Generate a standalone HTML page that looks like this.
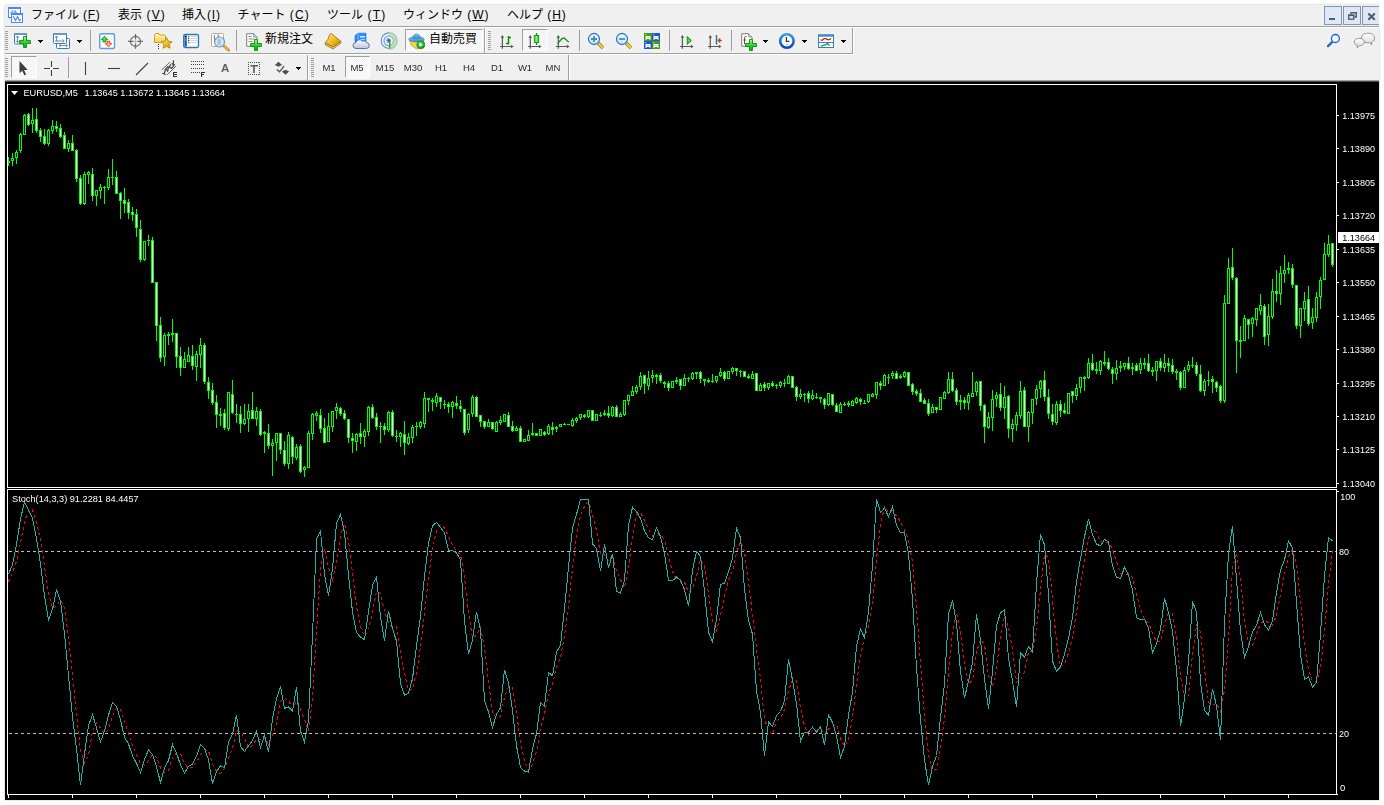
<!DOCTYPE html>
<html lang="ja">
<head>
<meta charset="utf-8">
<title>MetaTrader 4 - EURUSD,M5</title>
<style>
html,body{margin:0;padding:0;}
body{width:1384px;height:805px;overflow:hidden;background:#fff;position:relative;font-family:"Liberation Sans","Noto Sans CJK JP",sans-serif;}
#win{position:absolute;left:5px;top:5px;width:1374px;height:795px;background:#f0f0f0;box-shadow:0 0 2px rgba(0,0,0,0.28);}
.menu{position:absolute;top:5px;height:20px;line-height:20px;font-size:12px;color:#000;white-space:nowrap;}
.menu .l{letter-spacing:1.15px;}
.hl{position:absolute;height:1px;}
.vl{position:absolute;width:1px;}
.grip{position:absolute;width:3px;background:repeating-linear-gradient(to bottom,#a0a0a0 0,#a0a0a0 1px,transparent 1px,transparent 2px);}
.tf{position:absolute;top:58px;width:28px;height:20px;line-height:20px;text-align:center;font-size:9.5px;color:#2a2a2a;will-change:transform;}
.pressed{position:absolute;border:1px solid #a0a0a0;border-right-color:#fff;border-bottom-color:#fff;background-color:#f8f8f8;background-image:conic-gradient(#fff 25%,#f0f0f0 0 50%,#fff 0 75%,#f0f0f0 0);background-size:2px 2px;box-sizing:border-box;}
.dd{position:absolute;width:0;height:0;border-left:3px solid transparent;border-right:3px solid transparent;border-top:3px solid #000;}
.tbtxt{position:absolute;font-size:12px;color:#000;white-space:nowrap;line-height:14px;}
svg{position:absolute;overflow:visible;}
#chartbg{position:absolute;left:5px;top:81px;width:1374px;height:719px;background:#000;}
</style>
</head>
<body>
<div id="win"></div>
<!-- menu bar -->
<div class="menu" style="left:31px">ファイル<span class="l" style="letter-spacing:0.7px"> (<u>F</u>)</span></div>
<div class="menu" style="left:118px">表示<span class="l"> (<u>V</u>)</span></div>
<div class="menu" style="left:182px">挿入<span class="l" style="letter-spacing:0.8px;margin-left:1px">(<u>I</u>)</span></div>
<div class="menu" style="left:237.5px">チャート<span class="l"> (<u>C</u>)</span></div>
<div class="menu" style="left:327px">ツール<span class="l"> (<u>T</u>)</span></div>
<div class="menu" style="left:403px">ウィンドウ<span class="l" style="letter-spacing:0.95px"> (<u>W</u>)</span></div>
<div class="menu" style="left:507px">ヘルプ<span class="l" style="letter-spacing:0.9px"> (<u>H</u>)</span></div>
<div class="hl" style="left:5px;top:26px;width:1374px;background:#a0a0a0"></div>
<div class="hl" style="left:5px;top:27px;width:1374px;background:#fff"></div>
<!-- toolbar row 1 -->
<div class="grip" style="left:5px;top:31px;height:19px"></div>
<div class="hl" style="left:5px;top:53px;width:848px;background:#a0a0a0"></div>
<div class="hl" style="left:5px;top:54px;width:849px;background:#fff"></div>
<div class="vl" style="left:853px;top:28px;height:26px;background:#fff"></div>
<div class="vl" style="left:90px;top:30px;height:21px;background:#a0a0a0"></div>
<div class="vl" style="left:236px;top:30px;height:21px;background:#a0a0a0"></div>
<div class="vl" style="left:484px;top:28px;height:25px;background:#a0a0a0"></div>
<div class="vl" style="left:485px;top:28px;height:25px;background:#fff"></div>
<div class="grip" style="left:488px;top:31px;height:19px"></div>
<div class="vl" style="left:579px;top:30px;height:21px;background:#a0a0a0"></div>
<div class="vl" style="left:669px;top:30px;height:21px;background:#a0a0a0"></div>
<div class="vl" style="left:731px;top:30px;height:21px;background:#a0a0a0"></div>
<div class="vl" style="left:852px;top:28px;height:26px;background:#a0a0a0"></div>
<div class="tbtxt" style="left:265px;top:32px">新規注文</div>
<div class="pressed" style="left:405px;top:29px;width:78px;height:22px"></div>
<div class="tbtxt" style="left:429px;top:32px">自動売買</div>
<div class="pressed" style="left:522px;top:29px;width:26px;height:22px"></div>
<!-- toolbar row 2 -->
<div class="grip" style="left:5px;top:58px;height:19px"></div>
<div class="pressed" style="left:11px;top:56px;width:26px;height:22px"></div>
<div class="vl" style="left:68px;top:57px;height:21px;background:#a0a0a0"></div>
<div class="vl" style="left:307px;top:55px;height:25px;background:#a0a0a0"></div>
<div class="vl" style="left:308px;top:55px;height:25px;background:#fff"></div>
<div class="grip" style="left:311px;top:58px;height:19px"></div>
<div class="pressed" style="left:345px;top:56px;width:25px;height:22px"></div>
<div class="tf" style="left:315px">M1</div>
<div class="tf" style="left:343px">M5</div>
<div class="tf" style="left:371px">M15</div>
<div class="tf" style="left:399px">M30</div>
<div class="tf" style="left:427px">H1</div>
<div class="tf" style="left:455px">H4</div>
<div class="tf" style="left:483px">D1</div>
<div class="tf" style="left:511px">W1</div>
<div class="tf" style="left:539px">MN</div>
<div class="vl" style="left:568px;top:55px;height:25px;background:#a0a0a0"></div>
<div class="vl" style="left:569px;top:55px;height:25px;background:#fff"></div>
<div class="hl" style="left:5px;top:80px;width:1374px;background:#a4a4a4"></div>
<svg width="1384" height="82" viewBox="0 0 1384 82" style="left:0;top:0">
<defs>
<linearGradient id="gPlus" x1="0" y1="0" x2="0" y2="1"><stop offset="0" stop-color="#b0f8b0"/><stop offset="0.45" stop-color="#38d838"/><stop offset="1" stop-color="#0c9c0c"/></linearGradient>
<linearGradient id="gGold" x1="0" y1="0" x2="1" y2="1"><stop offset="0" stop-color="#fff0a0"/><stop offset="0.5" stop-color="#f0c020"/><stop offset="1" stop-color="#c08810"/></linearGradient>
<linearGradient id="gFold" x1="0" y1="0" x2="0" y2="1"><stop offset="0" stop-color="#fff6c0"/><stop offset="1" stop-color="#f2cf50"/></linearGradient>
<linearGradient id="gLens" x1="0" y1="0" x2="0" y2="1"><stop offset="0" stop-color="#f4fbff"/><stop offset="1" stop-color="#c4e4f4"/></linearGradient>
<linearGradient id="gTitle" x1="0" y1="0" x2="0" y2="1"><stop offset="0" stop-color="#6aa6e0"/><stop offset="1" stop-color="#2e6fb8"/></linearGradient>
<linearGradient id="gHat" x1="0" y1="0" x2="0" y2="1"><stop offset="0" stop-color="#7cc4f0"/><stop offset="1" stop-color="#3a8ccc"/></linearGradient>
<radialGradient id="gPlay" cx="0.4" cy="0.35" r="0.7"><stop offset="0" stop-color="#60e060"/><stop offset="1" stop-color="#0a8a0a"/></radialGradient>
<linearGradient id="gClock" x1="0" y1="0" x2="0" y2="1"><stop offset="0" stop-color="#3a9af0"/><stop offset="1" stop-color="#0a4aa8"/></linearGradient>
<linearGradient id="gCloud" x1="0" y1="0" x2="0" y2="1"><stop offset="0" stop-color="#ffffff"/><stop offset="1" stop-color="#b8c4dc"/></linearGradient>
<linearGradient id="gBub" x1="0" y1="0" x2="0" y2="1"><stop offset="0" stop-color="#ffffff"/><stop offset="1" stop-color="#d8d8e0"/></linearGradient>
<linearGradient id="gCandle" x1="0" y1="0" x2="1" y2="0"><stop offset="0" stop-color="#30d030"/><stop offset="0.5" stop-color="#80f080"/><stop offset="1" stop-color="#20c020"/></linearGradient>
<g id="plus"><path d="M-1.500 -5.500h3v4h4v3h-4v4h-3v-4h-4v-3h4z" fill="url(#gPlus)" stroke="#0c900c" stroke-width="0.9"/></g>
<g id="axes" fill="none" stroke="#585858" stroke-width="1.2"><path d="M2.7 8.5V21M0.3 18.7H12.5"/><path d="M0.9 10L2.7 7.3L4.5 10zM11.200 16.900L14 18.700L11.200 20.500z" fill="#585858" stroke="none"/></g>
</defs>
<!-- app icon -->
<g><rect x="8.5" y="7.5" width="12" height="10" fill="#fff" stroke="#4a86ff"/><rect x="8" y="7" width="13" height="2" fill="#4a86ff"/><path d="M10 13h2v-3M12 13v2M13 12h2v-2M15 12l2 1" stroke="#4a86ff" fill="none"/>
<rect x="11.5" y="13.5" width="11" height="9" fill="#fff" stroke="#4a86ff"/><rect x="11" y="13" width="12" height="2" fill="#4a86ff"/><path d="M13 16l2.5 4.5l2-4l2 4l1.5-1" stroke="#4a86ff" fill="none" stroke-width="1.2"/></g>
<!-- window buttons -->
<g stroke="#8596ab" fill="#dde9f7"><rect x="1324.5" y="6.5" width="17" height="18"/><rect x="1343.5" y="6.5" width="17" height="18"/><rect x="1362.5" y="6.5" width="17" height="18"/></g>
<rect x="1379" y="5" width="5" height="22" fill="#fff"/>
<rect x="1329" y="18" width="6" height="2" fill="#565c66"/>
<g fill="none" stroke="#565c66" stroke-width="1.4"><path d="M1351 14.5V12.7H1356.3V17H1354.5"/><rect x="1348.7" y="15.2" width="5" height="4"/></g>
<rect x="1348" y="14.5" width="6.4" height="1.6" fill="#565c66"/>
<path d="M1368.3 13.5L1374.8 19.8M1374.8 13.5L1368.3 19.8" stroke="#565c66" stroke-width="2.2" fill="none"/>
<!-- 1 new chart -->
<g><rect x="14.5" y="33.5" width="12" height="10.500" rx="1" fill="#fff" stroke="#3a7cc4"/><rect x="14" y="33" width="13" height="1.800" rx="0.8" fill="url(#gTitle)"/><path d="M17.500 36v6.500M16 37.800l1.500-1.800l1.500 1.800M16 40.700l1.500 1.800l1.500-1.800" stroke="#6a90b8" fill="none" stroke-width="1"/><use href="#plus" x="25" y="42"/></g>
<!-- 2 profiles -->
<g><rect x="56.500" y="38.500" width="13" height="10" rx="1" fill="#fff" stroke="#3a7cc4"/><path d="M59 45.500h8.500M60.800 44l-1.800 1.500l1.800 1.500M65.700 44l1.800 1.500l-1.800 1.500" stroke="#6a90b8" fill="none" stroke-width="1"/>
<rect x="53.500" y="33.500" width="13" height="10" rx="1" fill="#fff" stroke="#3a7cc4"/><rect x="53" y="33" width="14" height="1.800" rx="0.8" fill="url(#gTitle)"/><path d="M56.500 36v5h7.500M55 37.800l1.500-1.800l1.500 1.800M62.500 39.500l1.800 1.500l-1.800 1.500M55 41h3" stroke="#6a90b8" fill="none" stroke-width="1"/></g>
<!-- 3 market watch -->
<g><rect x="99.700" y="33.700" width="14.800" height="14.800" rx="1.500" fill="#fff" stroke="#5a9ede" stroke-width="1.400"/><path d="M101 37h12M101 39.500h12M101 42h12M101 44.500h12M101 47h12" stroke="#e4e4e4" stroke-width="0.6" stroke-dasharray="2 1"/>
<path d="M104.500 36.300l3.200 3.300h-1.800v2.400h-2.800v-2.400h-1.800z" fill="#50dc50" stroke="#0a900a" stroke-width="0.9"/><path d="M108.500 46.900l3.200-3.300h-1.800v-2.400h-2.800v2.400h-1.800z" fill="#ffa888" stroke="#e04810" stroke-width="0.9"/></g>
<!-- 4 crosshair -->
<g fill="none" stroke="#6a6a6a" stroke-width="1.100"><circle cx="135.500" cy="41.400" r="5"/><path d="M135.500 34v5M135.500 43.500v5.300M128 41.400h5.500M137.500 41.400h5.500" stroke-width="1.300"/><path d="M135.500 39v4.500M133.500 41.400h4" stroke="#b0b0b0" stroke-width="0.8"/></g>
<!-- 5 navigator -->
<g><path d="M154.500 36.500v-2l1-1h3.500l1 1.500h4.500l1 1v6.500h-11z" fill="url(#gFold)" stroke="#c8a028"/><path d="M158 44h1v1h-1zM158 46h1v1h-1zM158 48h1v1h-1z" fill="#303030" shape-rendering="crispEdges"/>
<path d="M166.600 37.600l1.700 3.600l3.900 0.500l-2.900 2.700l0.800 3.900l-3.500-1.900l-3.500 1.900l0.800-3.900l-2.900-2.700l3.900-0.500z" fill="url(#gGold)" stroke="#b88418" stroke-width="0.9"/></g>
<!-- 6 terminal -->
<g><rect x="183.700" y="34.500" width="14.800" height="13" rx="1.500" fill="#fff" stroke="#2e75b8" stroke-width="1.300"/><rect x="184.300" y="35.200" width="2.600" height="11.600" fill="#3a80c8"/><rect x="185" y="41" width="1.200" height="5" fill="#1a4a88"/><path d="M188 36.500h10M188 38.500h10M188 40.500h10M188 42.500h10" stroke="#bcd0f4" stroke-width="0.8"/><rect x="188" y="36" width="1.200" height="1.200" fill="#f02020"/><rect x="188" y="38" width="1.200" height="1.200" fill="#304030"/><rect x="188" y="40" width="1.200" height="1.200" fill="#304030"/><rect x="188" y="42" width="1.200" height="1.200" fill="#f02020"/><rect x="185" y="36" width="1.200" height="1.200" fill="#000"/></g>
<!-- 7 strategy tester -->
<g><rect x="211.500" y="33.500" width="12" height="13" rx="1" fill="#fff" stroke="#b4a890"/><path d="M214.500 35v8M213.500 37h1M218 34.500v8M218 36h1.500" stroke="#808080" stroke-width="0.9" fill="none"/><path d="M224 46l4.500 4" stroke="#b88a10" stroke-width="3" stroke-linecap="round"/><path d="M224 46l4.300 3.800" stroke="#e8c040" stroke-width="1.400" stroke-linecap="round"/><circle cx="219.600" cy="42" r="5" fill="#cfe4f6" fill-opacity="0.850" stroke="#6aa0dc" stroke-width="1.200"/><rect x="217.500" y="39" width="3.500" height="6" fill="#a8bccc" opacity="0.800"/></g>
<!-- 8 new order -->
<g><path d="M246.700 33.700h7l3.300 3.300v9.300h-10.300z" fill="#fff" stroke="#7c7c7c"/><path d="M253.700 33.700v3.300h3.300" fill="#e0e0e0" stroke="#7c7c7c" stroke-width="0.8"/><path d="M248.500 36.500h3M248.500 39h6M248.500 41.500h4" stroke="#909090"/><use href="#plus" x="256" y="45"/></g>
<!-- 9 metaeditor -->
<g><path d="M325.300 42.700L333 47L340.800 41.200L340.900 43.200L333 49L325.200 44.800z" fill="#c89018" stroke="#a06408" stroke-width="0.700"/><path d="M326 44l7 3.900l7.400-5.400" fill="none" stroke="#fff0b0" stroke-width="0.700"/><path d="M331 33.400L340.800 41.200L333 47L325.300 42.700Q328.500 40 329.600 34.500z" fill="url(#gGold)" stroke="#a86c10" stroke-width="0.900"/></g>
<!-- 10 cloud -->
<g><path d="M355 35.500l3-2.300h8v9h-11z" fill="#1e90ff" stroke="#1670d8" stroke-width="0.6"/><path d="M358 33.200v9" stroke="#8ccaff" stroke-width="0.8"/><rect x="360" y="36" width="5" height="1.500" fill="#d8ecff"/><rect x="360" y="39" width="5" height="1.200" fill="#a8d4ff"/>
<path d="M356 48.500a3 3 0 0 1 0-6a3.500 3.500 0 0 1 6.200-1.400a3 3 0 0 1 4 1.500a2.800 2.800 0 0 1 0.300 5.900z" fill="url(#gCloud)" stroke="#4868a8" stroke-width="0.9"/></g>
<!-- 11 signals -->
<g fill="none"><path d="M389 33a7.800 7.800 0 0 1 0 15.600" stroke="#58a858" stroke-width="2.400" opacity="0.420"/><path d="M389 36a4.800 4.800 0 0 1 0 9.600" stroke="#3c9c3c" stroke-width="2" opacity="0.450"/><path d="M389 48.500a7.800 7.800 0 0 1 0-15.600" stroke="#5a8ee0" stroke-width="1.100"/><path d="M389 45.800a5 5 0 0 1 0-10" stroke="#6c9ce4" stroke-width="1.100"/><path d="M389 43a2.500 2.500 0 0 1 0-5" stroke="#7ca8e8" stroke-width="1"/><circle cx="389" cy="40.500" r="1.700" fill="#2464c8"/><path d="M389.700 41v7.500" stroke="#28a828" stroke-width="1.500"/></g>
<!-- 12 autotrading icon -->
<g><path d="M409.500 40.500h14.500l-4.500 8l-3 0.500l-5-3.500z" fill="#f0d44c" stroke="#c8a020" stroke-width="0.8"/><ellipse cx="416.500" cy="39.300" rx="7.800" ry="2.600" fill="url(#gHat)" stroke="#3a88c4" stroke-width="0.6"/><path d="M412.500 38.500c0-6 8-6 8 0z" fill="url(#gHat)" stroke="#3a88c4" stroke-width="0.6"/><circle cx="420.800" cy="44.800" r="4" fill="url(#gPlay)" stroke="#0a7a0a" stroke-width="0.6"/><path d="M419.500 42.500l3.300 2.300l-3.300 2.300z" fill="#fff"/></g>
<!-- 13 bars -->
<g><use href="#axes" x="499.700" y="27.800"/><path d="M508.500 36v8.600M508.500 37.500h2.500M506 43.500h2.500" stroke="#0a8a0a" stroke-width="1.500" fill="none"/></g>
<!-- 14 candles -->
<g><use href="#axes" x="527.600" y="27.800"/><path d="M536.500 33v12" stroke="#0a8a0a" stroke-width="1.300"/><rect x="534.300" y="35.500" width="4.400" height="7" fill="url(#gCandle)" stroke="#0a9a0a" stroke-width="0.900"/></g>
<!-- 15 line -->
<g><use href="#axes" x="555.600" y="27.800"/><path d="M557.500 43.500c2-1 3.500-5.500 6-5.500c2 0 3 3 5.300 4" stroke="#1a9a1a" stroke-width="1.400" fill="none"/></g>
<!-- 16 zoom in -->
<g id="zin"><path d="M598.300 43.300l4.700 4.700" stroke="#a07c10" stroke-width="3.600" stroke-linecap="butt"/><path d="M598.600 43.600l4.200 4.200" stroke="#f0d848" stroke-width="2"/><circle cx="594" cy="39" r="5.500" fill="url(#gLens)" stroke="#2a7cc8" stroke-width="1.300"/><path d="M591 39h6M594 36v6" stroke="#4a8cb4" stroke-width="1.800"/></g>
<!-- 17 zoom out -->
<g><path d="M626.300 43.300l4.700 4.700" stroke="#a07c10" stroke-width="3.600"/><path d="M626.600 43.600l4.200 4.200" stroke="#f0d848" stroke-width="2"/><circle cx="622" cy="39" r="5.500" fill="url(#gLens)" stroke="#2a7cc8" stroke-width="1.300"/><path d="M619 39h6" stroke="#4a8cb4" stroke-width="1.800"/></g>
<!-- 18 tile -->
<g><rect x="644" y="33" width="8" height="8" fill="#3c9c1c"/><rect x="652" y="33" width="8" height="8" fill="#2254cc"/><rect x="644" y="41" width="8" height="8" fill="#2254cc"/><rect x="652" y="41" width="8" height="8" fill="#3c9c1c"/>
<g fill="#fff"><path d="M645.500 36h5v4h-1v-1h-3v1h-1zM653.500 36h5v4h-1v-1h-3v1h-1zM645.500 44h5v4h-1v-1h-3v1h-1zM653.500 44h5v4h-1v-1h-3v1h-1z"/><rect x="645.300" y="34.200" width="1" height="1"/><rect x="653.300" y="34.200" width="1" height="1"/><rect x="645.300" y="42.200" width="1" height="1"/><rect x="653.300" y="42.200" width="1" height="1"/></g>
<path d="M646.500 37.500h3M654.500 45.500h3" stroke="#a8dc98" stroke-width="0.8"/><path d="M654.500 37.500h3M646.500 45.500h3" stroke="#a8bcf0" stroke-width="0.8"/></g>
<!-- 19 autoscroll -->
<g><use href="#axes" x="679.700" y="27.800"/><path d="M687.300 37l3.700 3.500l-3.700 3.500z" fill="#70e070" stroke="#1a9a1a" stroke-width="1.100"/></g>
<!-- 20 chart shift -->
<g><use href="#axes" x="707.600" y="27.800"/><path d="M716.500 35v9.600" stroke="#1f6fb4" stroke-width="1.400"/><path d="M722 40.500h-4M720 38.500l-2.300 2l2.300 2z" stroke="#d04808" fill="#d04808" stroke-width="1"/></g>
<!-- 21 indicators -->
<g><path d="M741.700 33.700h7l3.300 3.300v9.300h-10.300z" fill="#fff" stroke="#7c7c7c"/><path d="M748.700 33.700v3.300h3.300" fill="#e0e0e0" stroke="#7c7c7c" stroke-width="0.8"/><path d="M746.500 36.500c-1.500-0.500-2 0.500-2 1.500v6M743.500 40h2.500" stroke="#504030" fill="none" stroke-width="0.9"/><use href="#plus" x="751" y="45"/></g>
<!-- 22 clock -->
<g><circle cx="786.900" cy="41" r="6.700" fill="#fff" stroke="url(#gClock)" stroke-width="2.600"/><circle cx="786.900" cy="41" r="4.600" fill="none" stroke="#d0d8e0" stroke-width="0.6" stroke-dasharray="0.6 2.430"/><path d="M786.400 37v4.300h3" stroke="#303030" stroke-width="1.200" fill="none"/><path d="M785.500 44.500h3" stroke="#80b8f0" stroke-width="0.8"/></g>
<!-- 23 templates -->
<g><rect x="818.500" y="34.500" width="15" height="13" fill="#fff" stroke="#3a7cc4"/><rect x="818" y="34" width="16" height="2.600" fill="url(#gTitle)"/><path d="M819 42.500h14" stroke="#3a7cc4"/><path d="M820.500 40.200h2l1.500-1.500h2l1.500 1h2l1.500-1.200" stroke="#a02808" stroke-width="1.200" fill="none"/><path d="M820.500 46h2l1.500-1.200h2l1.500-1.300l2.200 2" stroke="#109428" stroke-width="1.200" fill="none"/></g>
<!-- search -->
<g fill="none"><path d="M1332.700 41.700l-4.700 4.500" stroke="#2a68d0" stroke-width="2.400" stroke-linecap="round"/><circle cx="1335.400" cy="38.500" r="4" stroke="#2060d8" stroke-width="1.300" fill="#f4f4f8"/></g>
<!-- chat -->
<g stroke="#8c8c8c" stroke-width="0.9"><path d="M1368 33.200c4 0 6.600 2.200 6.600 4.800s-1.600 4-3.400 4.500l0.600 2.200l-2.400-2c-5 0.300-8-1.800-8-4.700s2.600-4.800 6.600-4.800z" fill="url(#gBub)"/><path d="M1359.300 38.300c3 0 5 1.700 5 3.700s-2 3.700-5 3.800l-2.300 1.900l0.400-2.200c-1.800-0.500-3.100-1.800-3.100-3.500c0-2 2-3.700 5-3.700z" fill="url(#gBub)"/></g>
<g fill="#000" shape-rendering="crispEdges"><path d="M38 40h5v1h-1v1h-1v1h-1v-1h-1v-1h-1z"/><path d="M77 40h5v1h-1v1h-1v1h-1v-1h-1v-1h-1z"/><path d="M763 40h5v1h-1v1h-1v1h-1v-1h-1v-1h-1z"/><path d="M802 40h5v1h-1v1h-1v1h-1v-1h-1v-1h-1z"/><path d="M841 40h5v1h-1v1h-1v1h-1v-1h-1v-1h-1z"/><path d="M296 67h5v1h-1v1h-1v1h-1v-1h-1v-1h-1z"/></g>
<!-- row 2 icons -->
<path d="M19.500 61v12.300l2.800-2.600l2 4.600l1.800-0.800l-2-4.500h3.700z" fill="#3c3c3c"/>
<path d="M51.500 61v6M51.500 70v6M44 68.500h6M53 68.500h6" stroke="#404040" stroke-width="1.100" fill="none"/>
<path d="M85.500 62v13" stroke="#404040" stroke-width="1.100"/>
<path d="M108 68.500h12" stroke="#404040" stroke-width="1.100"/>
<path d="M136 75l12-12" stroke="#404040" stroke-width="1.100"/>
<g stroke="#585858" stroke-width="0.9" fill="none"><path d="M161.500 70l8.500-8M167 75l9-9"/></g>
<g stroke="#404040" stroke-width="1.200" fill="none"><path d="M164 74.700L165.300 69.500L167.800 66.300M167.200 71.700L168.600 67.200L171 64.300M170.800 68.800L173.200 66.800L173.500 60.200M162.300 73.300l3.400 1.200M165.200 69.400l3.300 1M168.500 66.700l3 1.200M171.500 63.500l3.500 1.500"/></g>
<g fill="#303030" shape-rendering="crispEdges"><rect x="173" y="72" width="1.300" height="5"/><rect x="173" y="72" width="4" height="1"/><rect x="173" y="74" width="3.500" height="1"/><rect x="173" y="76" width="4" height="1"/>
<rect x="201" y="72" width="1.300" height="5"/><rect x="201" y="72" width="4" height="1"/><rect x="201" y="74" width="3.300" height="1"/></g>
<g fill="#404040" shape-rendering="crispEdges"><rect x="191" y="61" width="1" height="1"/><rect x="193" y="61" width="1" height="1"/><rect x="195" y="61" width="1" height="1"/><rect x="197" y="61" width="1" height="1"/><rect x="199" y="61" width="1" height="1"/><rect x="201" y="61" width="1" height="1"/><rect x="203" y="61" width="1" height="1"/><rect x="191" y="64" width="1" height="1"/><rect x="193" y="64" width="1" height="1"/><rect x="195" y="64" width="1" height="1"/><rect x="197" y="64" width="1" height="1"/><rect x="199" y="64" width="1" height="1"/><rect x="201" y="64" width="1" height="1"/><rect x="203" y="64" width="1" height="1"/><rect x="191" y="68" width="1" height="1"/><rect x="193" y="68" width="1" height="1"/><rect x="195" y="68" width="1" height="1"/><rect x="197" y="68" width="1" height="1"/><rect x="199" y="68" width="1" height="1"/><rect x="201" y="68" width="1" height="1"/><rect x="203" y="68" width="1" height="1"/><rect x="191" y="72" width="1" height="1"/><rect x="193" y="72" width="1" height="1"/><rect x="195" y="72" width="1" height="1"/><rect x="197" y="72" width="1" height="1"/><rect x="199" y="72" width="1" height="1"/></g>
<g fill="#505050" shape-rendering="crispEdges"><rect x="248" y="62" width="1" height="1"/><rect x="248" y="74" width="1" height="1"/><rect x="250" y="62" width="1" height="1"/><rect x="250" y="74" width="1" height="1"/><rect x="252" y="62" width="1" height="1"/><rect x="252" y="74" width="1" height="1"/><rect x="254" y="62" width="1" height="1"/><rect x="254" y="74" width="1" height="1"/><rect x="256" y="62" width="1" height="1"/><rect x="256" y="74" width="1" height="1"/><rect x="258" y="62" width="1" height="1"/><rect x="258" y="74" width="1" height="1"/><rect x="248" y="62" width="1" height="1"/><rect x="259" y="62" width="1" height="1"/><rect x="248" y="64" width="1" height="1"/><rect x="259" y="64" width="1" height="1"/><rect x="248" y="66" width="1" height="1"/><rect x="259" y="66" width="1" height="1"/><rect x="248" y="68" width="1" height="1"/><rect x="259" y="68" width="1" height="1"/><rect x="248" y="70" width="1" height="1"/><rect x="259" y="70" width="1" height="1"/><rect x="248" y="72" width="1" height="1"/><rect x="259" y="72" width="1" height="1"/><rect x="248" y="74" width="1" height="1"/><rect x="259" y="74" width="1" height="1"/><rect x="258" y="74" width="1" height="1"/></g>
<path d="M250.400 65.700h7.600M254 65.700v7.300" stroke="#5a5a5a" stroke-width="1.600" fill="none"/>
<path d="M278.500 61.800l3.600 3.200l-3.600 1.800l-3.600-1.800zM285.500 74.800l3.600-3.200l-3.600-1.800l-3.600 1.800z" fill="#505050"/><path d="M276.800 69.500l2.700 2.300l4.500-5.600" stroke="#505050" stroke-width="1.300" fill="none"/>
</svg>
<div style="position:absolute;left:221.300px;top:62px;width:9px;height:13px;font:bold 11.500px 'Liberation Sans',sans-serif;color:#606060;line-height:13px;will-change:transform">A</div>
<div id="chartbg"></div>
<svg width="1384" height="805" viewBox="0 0 1384 805" style="left:0;top:0" shape-rendering="crispEdges">
<rect x="5" y="81" width="1374" height="1" fill="#484848"/>
<g fill="#fff"><rect x="7" y="84" width="1330" height="1"/><rect x="7" y="487" width="1330" height="1"/><rect x="7" y="84" width="1" height="404"/><rect x="1336" y="84" width="1" height="404"/><rect x="7" y="489" width="1330" height="1"/><rect x="7" y="794" width="1331" height="1"/><rect x="7" y="489" width="1" height="306"/><rect x="1336" y="489" width="1" height="306"/><rect x="1337" y="115" width="2" height="1"/><rect x="1337" y="148" width="2" height="1"/><rect x="1337" y="182" width="2" height="1"/><rect x="1337" y="215" width="2" height="1"/><rect x="1337" y="249" width="2" height="1"/><rect x="1337" y="282" width="2" height="1"/><rect x="1337" y="316" width="2" height="1"/><rect x="1337" y="349" width="2" height="1"/><rect x="1337" y="383" width="2" height="1"/><rect x="1337" y="416" width="2" height="1"/><rect x="1337" y="449" width="2" height="1"/><rect x="1337" y="483" width="2" height="1"/><rect x="1337" y="491" width="2" height="1"/><rect x="8" y="795" width="1" height="3"/><rect x="72" y="795" width="1" height="3"/><rect x="136" y="795" width="1" height="3"/><rect x="200" y="795" width="1" height="3"/><rect x="264" y="795" width="1" height="3"/><rect x="328" y="795" width="1" height="3"/><rect x="392" y="795" width="1" height="3"/><rect x="456" y="795" width="1" height="3"/><rect x="520" y="795" width="1" height="3"/><rect x="584" y="795" width="1" height="3"/><rect x="648" y="795" width="1" height="3"/><rect x="712" y="795" width="1" height="3"/><rect x="776" y="795" width="1" height="3"/><rect x="840" y="795" width="1" height="3"/><rect x="904" y="795" width="1" height="3"/><rect x="968" y="795" width="1" height="3"/><rect x="1032" y="795" width="1" height="3"/><rect x="1096" y="795" width="1" height="3"/><rect x="1160" y="795" width="1" height="3"/><rect x="1224" y="795" width="1" height="3"/><rect x="1288" y="795" width="1" height="3"/><rect x="1338" y="232" width="41" height="11"/></g>
<g><rect x="8" y="157" width="1" height="9" fill="#00ff00"/><rect x="7" y="161" width="3" height="2" fill="#00ff00"/><rect x="12" y="153" width="1" height="13" fill="#00ff00"/><rect x="11" y="158" width="3" height="3" fill="#00ff00"/><rect x="12" y="159" width="1" height="1" fill="#000"/><rect x="16" y="150" width="1" height="14" fill="#00ff00"/><rect x="15" y="152" width="3" height="6" fill="#00ff00"/><rect x="16" y="153" width="1" height="4" fill="#000"/><rect x="20" y="133" width="1" height="20" fill="#00ff00"/><rect x="19" y="134" width="3" height="17" fill="#00ff00"/><rect x="20" y="135" width="1" height="15" fill="#000"/><rect x="24" y="114" width="1" height="21" fill="#00ff00"/><rect x="23" y="115" width="3" height="20" fill="#00ff00"/><rect x="24" y="116" width="1" height="18" fill="#000"/><rect x="28" y="113" width="1" height="13" fill="#00ff00"/><rect x="27" y="114" width="3" height="11" fill="#00ff00"/><rect x="28" y="115" width="1" height="9" fill="#fff"/><rect x="32" y="108" width="1" height="25" fill="#00ff00"/><rect x="31" y="120" width="3" height="4" fill="#00ff00"/><rect x="32" y="121" width="1" height="2" fill="#000"/><rect x="36" y="108" width="1" height="25" fill="#00ff00"/><rect x="35" y="119" width="3" height="12" fill="#00ff00"/><rect x="36" y="120" width="1" height="10" fill="#fff"/><rect x="40" y="128" width="1" height="14" fill="#00ff00"/><rect x="39" y="130" width="3" height="7" fill="#00ff00"/><rect x="40" y="131" width="1" height="5" fill="#fff"/><rect x="44" y="129" width="1" height="16" fill="#00ff00"/><rect x="43" y="136" width="3" height="8" fill="#00ff00"/><rect x="44" y="137" width="1" height="6" fill="#fff"/><rect x="48" y="129" width="1" height="17" fill="#00ff00"/><rect x="47" y="130" width="3" height="14" fill="#00ff00"/><rect x="48" y="131" width="1" height="12" fill="#000"/><rect x="52" y="120" width="1" height="14" fill="#00ff00"/><rect x="51" y="126" width="3" height="5" fill="#00ff00"/><rect x="52" y="127" width="1" height="3" fill="#000"/><rect x="56" y="121" width="1" height="11" fill="#00ff00"/><rect x="55" y="126" width="3" height="3" fill="#00ff00"/><rect x="56" y="127" width="1" height="1" fill="#fff"/><rect x="60" y="124" width="1" height="14" fill="#00ff00"/><rect x="59" y="128" width="3" height="9" fill="#00ff00"/><rect x="60" y="129" width="1" height="7" fill="#fff"/><rect x="64" y="132" width="1" height="17" fill="#00ff00"/><rect x="63" y="135" width="3" height="14" fill="#00ff00"/><rect x="64" y="136" width="1" height="12" fill="#fff"/><rect x="68" y="140" width="1" height="12" fill="#00ff00"/><rect x="67" y="143" width="3" height="6" fill="#00ff00"/><rect x="68" y="144" width="1" height="4" fill="#000"/><rect x="72" y="135" width="1" height="16" fill="#00ff00"/><rect x="71" y="143" width="3" height="8" fill="#00ff00"/><rect x="72" y="144" width="1" height="6" fill="#fff"/><rect x="76" y="149" width="1" height="33" fill="#00ff00"/><rect x="75" y="150" width="3" height="29" fill="#00ff00"/><rect x="76" y="151" width="1" height="27" fill="#fff"/><rect x="80" y="175" width="1" height="30" fill="#00ff00"/><rect x="79" y="178" width="3" height="26" fill="#00ff00"/><rect x="80" y="179" width="1" height="24" fill="#fff"/><rect x="84" y="172" width="1" height="33" fill="#00ff00"/><rect x="83" y="174" width="3" height="30" fill="#00ff00"/><rect x="84" y="175" width="1" height="28" fill="#000"/><rect x="88" y="171" width="1" height="13" fill="#00ff00"/><rect x="87" y="172" width="3" height="3" fill="#00ff00"/><rect x="88" y="173" width="1" height="1" fill="#000"/><rect x="92" y="168" width="1" height="33" fill="#00ff00"/><rect x="91" y="174" width="3" height="22" fill="#00ff00"/><rect x="92" y="175" width="1" height="20" fill="#fff"/><rect x="96" y="190" width="1" height="16" fill="#00ff00"/><rect x="95" y="190" width="3" height="6" fill="#00ff00"/><rect x="96" y="191" width="1" height="4" fill="#000"/><rect x="100" y="184" width="1" height="15" fill="#00ff00"/><rect x="99" y="187" width="3" height="4" fill="#00ff00"/><rect x="100" y="188" width="1" height="2" fill="#000"/><rect x="104" y="186" width="1" height="18" fill="#00ff00"/><rect x="103" y="187" width="3" height="1" fill="#00ff00"/><rect x="108" y="169" width="1" height="21" fill="#00ff00"/><rect x="107" y="177" width="3" height="11" fill="#00ff00"/><rect x="108" y="178" width="1" height="9" fill="#000"/><rect x="112" y="159" width="1" height="26" fill="#00ff00"/><rect x="111" y="177" width="3" height="1" fill="#00ff00"/><rect x="116" y="171" width="1" height="23" fill="#00ff00"/><rect x="115" y="177" width="3" height="17" fill="#00ff00"/><rect x="116" y="178" width="1" height="15" fill="#fff"/><rect x="120" y="192" width="1" height="27" fill="#00ff00"/><rect x="119" y="193" width="3" height="8" fill="#00ff00"/><rect x="120" y="194" width="1" height="6" fill="#fff"/><rect x="124" y="188" width="1" height="25" fill="#00ff00"/><rect x="123" y="200" width="3" height="4" fill="#00ff00"/><rect x="124" y="201" width="1" height="2" fill="#fff"/><rect x="128" y="199" width="1" height="20" fill="#00ff00"/><rect x="127" y="202" width="3" height="11" fill="#00ff00"/><rect x="128" y="203" width="1" height="9" fill="#fff"/><rect x="132" y="207" width="1" height="14" fill="#00ff00"/><rect x="131" y="212" width="3" height="3" fill="#00ff00"/><rect x="132" y="213" width="1" height="1" fill="#fff"/><rect x="136" y="209" width="1" height="28" fill="#00ff00"/><rect x="135" y="214" width="3" height="14" fill="#00ff00"/><rect x="136" y="215" width="1" height="12" fill="#fff"/><rect x="140" y="220" width="1" height="42" fill="#00ff00"/><rect x="139" y="229" width="3" height="31" fill="#00ff00"/><rect x="140" y="230" width="1" height="29" fill="#fff"/><rect x="144" y="241" width="1" height="20" fill="#00ff00"/><rect x="143" y="241" width="3" height="19" fill="#00ff00"/><rect x="144" y="242" width="1" height="17" fill="#000"/><rect x="148" y="235" width="1" height="11" fill="#00ff00"/><rect x="147" y="240" width="3" height="1" fill="#00ff00"/><rect x="152" y="237" width="1" height="46" fill="#00ff00"/><rect x="151" y="240" width="3" height="43" fill="#00ff00"/><rect x="152" y="241" width="1" height="41" fill="#fff"/><rect x="156" y="282" width="1" height="59" fill="#00ff00"/><rect x="155" y="282" width="3" height="44" fill="#00ff00"/><rect x="156" y="283" width="1" height="42" fill="#fff"/><rect x="160" y="317" width="1" height="45" fill="#00ff00"/><rect x="159" y="325" width="3" height="33" fill="#00ff00"/><rect x="160" y="326" width="1" height="31" fill="#fff"/><rect x="164" y="333" width="1" height="33" fill="#00ff00"/><rect x="163" y="335" width="3" height="22" fill="#00ff00"/><rect x="164" y="336" width="1" height="20" fill="#000"/><rect x="168" y="332" width="1" height="13" fill="#00ff00"/><rect x="167" y="334" width="3" height="2" fill="#00ff00"/><rect x="172" y="319" width="1" height="23" fill="#00ff00"/><rect x="171" y="333" width="3" height="2" fill="#00ff00"/><rect x="176" y="333" width="1" height="35" fill="#00ff00"/><rect x="175" y="333" width="3" height="24" fill="#00ff00"/><rect x="176" y="334" width="1" height="22" fill="#fff"/><rect x="180" y="347" width="1" height="29" fill="#00ff00"/><rect x="179" y="356" width="3" height="12" fill="#00ff00"/><rect x="180" y="357" width="1" height="10" fill="#fff"/><rect x="184" y="352" width="1" height="16" fill="#00ff00"/><rect x="183" y="359" width="3" height="9" fill="#00ff00"/><rect x="184" y="360" width="1" height="7" fill="#000"/><rect x="188" y="347" width="1" height="15" fill="#00ff00"/><rect x="187" y="355" width="3" height="7" fill="#00ff00"/><rect x="188" y="356" width="1" height="5" fill="#000"/><rect x="192" y="345" width="1" height="25" fill="#00ff00"/><rect x="191" y="356" width="3" height="10" fill="#00ff00"/><rect x="192" y="357" width="1" height="8" fill="#fff"/><rect x="196" y="351" width="1" height="30" fill="#00ff00"/><rect x="195" y="354" width="3" height="13" fill="#00ff00"/><rect x="196" y="355" width="1" height="11" fill="#000"/><rect x="200" y="338" width="1" height="30" fill="#00ff00"/><rect x="199" y="345" width="3" height="10" fill="#00ff00"/><rect x="200" y="346" width="1" height="8" fill="#000"/><rect x="204" y="343" width="1" height="41" fill="#00ff00"/><rect x="203" y="345" width="3" height="37" fill="#00ff00"/><rect x="204" y="346" width="1" height="35" fill="#fff"/><rect x="208" y="377" width="1" height="22" fill="#00ff00"/><rect x="207" y="382" width="3" height="9" fill="#00ff00"/><rect x="208" y="383" width="1" height="7" fill="#fff"/><rect x="212" y="383" width="1" height="22" fill="#00ff00"/><rect x="211" y="390" width="3" height="13" fill="#00ff00"/><rect x="212" y="391" width="1" height="11" fill="#fff"/><rect x="216" y="395" width="1" height="33" fill="#00ff00"/><rect x="215" y="402" width="3" height="13" fill="#00ff00"/><rect x="216" y="403" width="1" height="11" fill="#fff"/><rect x="220" y="408" width="1" height="18" fill="#00ff00"/><rect x="219" y="414" width="3" height="2" fill="#00ff00"/><rect x="224" y="409" width="1" height="21" fill="#00ff00"/><rect x="223" y="413" width="3" height="15" fill="#00ff00"/><rect x="224" y="414" width="1" height="13" fill="#fff"/><rect x="228" y="392" width="1" height="39" fill="#00ff00"/><rect x="227" y="392" width="3" height="37" fill="#00ff00"/><rect x="228" y="393" width="1" height="35" fill="#000"/><rect x="232" y="380" width="1" height="34" fill="#00ff00"/><rect x="231" y="394" width="3" height="19" fill="#00ff00"/><rect x="232" y="395" width="1" height="17" fill="#fff"/><rect x="236" y="404" width="1" height="19" fill="#00ff00"/><rect x="235" y="414" width="3" height="1" fill="#00ff00"/><rect x="240" y="406" width="1" height="27" fill="#00ff00"/><rect x="239" y="414" width="3" height="10" fill="#00ff00"/><rect x="240" y="415" width="1" height="8" fill="#fff"/><rect x="244" y="404" width="1" height="21" fill="#00ff00"/><rect x="243" y="419" width="3" height="5" fill="#00ff00"/><rect x="244" y="420" width="1" height="3" fill="#000"/><rect x="248" y="404" width="1" height="28" fill="#00ff00"/><rect x="247" y="411" width="3" height="8" fill="#00ff00"/><rect x="248" y="412" width="1" height="6" fill="#000"/><rect x="252" y="392" width="1" height="27" fill="#00ff00"/><rect x="251" y="410" width="3" height="9" fill="#00ff00"/><rect x="252" y="411" width="1" height="7" fill="#fff"/><rect x="256" y="407" width="1" height="19" fill="#00ff00"/><rect x="255" y="411" width="3" height="8" fill="#00ff00"/><rect x="256" y="412" width="1" height="6" fill="#000"/><rect x="260" y="409" width="1" height="27" fill="#00ff00"/><rect x="259" y="411" width="3" height="24" fill="#00ff00"/><rect x="260" y="412" width="1" height="22" fill="#fff"/><rect x="264" y="431" width="1" height="22" fill="#00ff00"/><rect x="263" y="432" width="3" height="2" fill="#00ff00"/><rect x="268" y="424" width="1" height="25" fill="#00ff00"/><rect x="267" y="433" width="3" height="13" fill="#00ff00"/><rect x="268" y="434" width="1" height="11" fill="#fff"/><rect x="272" y="439" width="1" height="37" fill="#00ff00"/><rect x="271" y="443" width="3" height="3" fill="#00ff00"/><rect x="272" y="444" width="1" height="1" fill="#000"/><rect x="276" y="433" width="1" height="28" fill="#00ff00"/><rect x="275" y="433" width="3" height="10" fill="#00ff00"/><rect x="276" y="434" width="1" height="8" fill="#000"/><rect x="280" y="433" width="1" height="21" fill="#00ff00"/><rect x="279" y="433" width="3" height="17" fill="#00ff00"/><rect x="280" y="434" width="1" height="15" fill="#fff"/><rect x="284" y="441" width="1" height="25" fill="#00ff00"/><rect x="283" y="450" width="3" height="14" fill="#00ff00"/><rect x="284" y="451" width="1" height="12" fill="#fff"/><rect x="288" y="432" width="1" height="37" fill="#00ff00"/><rect x="287" y="435" width="3" height="29" fill="#00ff00"/><rect x="288" y="436" width="1" height="27" fill="#000"/><rect x="292" y="436" width="1" height="28" fill="#00ff00"/><rect x="291" y="437" width="3" height="20" fill="#00ff00"/><rect x="292" y="438" width="1" height="18" fill="#fff"/><rect x="296" y="444" width="1" height="16" fill="#00ff00"/><rect x="295" y="447" width="3" height="11" fill="#00ff00"/><rect x="296" y="448" width="1" height="9" fill="#000"/><rect x="300" y="444" width="1" height="29" fill="#00ff00"/><rect x="299" y="446" width="3" height="26" fill="#00ff00"/><rect x="300" y="447" width="1" height="24" fill="#fff"/><rect x="304" y="466" width="1" height="11" fill="#00ff00"/><rect x="303" y="467" width="3" height="3" fill="#00ff00"/><rect x="304" y="468" width="1" height="1" fill="#000"/><rect x="308" y="431" width="1" height="37" fill="#00ff00"/><rect x="307" y="433" width="3" height="35" fill="#00ff00"/><rect x="308" y="434" width="1" height="33" fill="#000"/><rect x="312" y="413" width="1" height="27" fill="#00ff00"/><rect x="311" y="414" width="3" height="20" fill="#00ff00"/><rect x="312" y="415" width="1" height="18" fill="#000"/><rect x="316" y="411" width="1" height="10" fill="#00ff00"/><rect x="315" y="413" width="3" height="3" fill="#00ff00"/><rect x="316" y="414" width="1" height="1" fill="#000"/><rect x="320" y="409" width="1" height="24" fill="#00ff00"/><rect x="319" y="415" width="3" height="14" fill="#00ff00"/><rect x="320" y="416" width="1" height="12" fill="#fff"/><rect x="324" y="418" width="1" height="25" fill="#00ff00"/><rect x="323" y="428" width="3" height="15" fill="#00ff00"/><rect x="324" y="429" width="1" height="13" fill="#fff"/><rect x="328" y="413" width="1" height="29" fill="#00ff00"/><rect x="327" y="426" width="3" height="16" fill="#00ff00"/><rect x="328" y="427" width="1" height="14" fill="#000"/><rect x="332" y="411" width="1" height="21" fill="#00ff00"/><rect x="331" y="411" width="3" height="16" fill="#00ff00"/><rect x="332" y="412" width="1" height="14" fill="#000"/><rect x="336" y="403" width="1" height="16" fill="#00ff00"/><rect x="335" y="407" width="3" height="4" fill="#00ff00"/><rect x="336" y="408" width="1" height="2" fill="#000"/><rect x="340" y="407" width="1" height="9" fill="#00ff00"/><rect x="339" y="408" width="3" height="6" fill="#00ff00"/><rect x="340" y="409" width="1" height="4" fill="#fff"/><rect x="344" y="410" width="1" height="10" fill="#00ff00"/><rect x="343" y="413" width="3" height="6" fill="#00ff00"/><rect x="344" y="414" width="1" height="4" fill="#fff"/><rect x="348" y="419" width="1" height="24" fill="#00ff00"/><rect x="347" y="419" width="3" height="19" fill="#00ff00"/><rect x="348" y="420" width="1" height="17" fill="#fff"/><rect x="352" y="433" width="1" height="20" fill="#00ff00"/><rect x="351" y="438" width="3" height="3" fill="#00ff00"/><rect x="352" y="439" width="1" height="1" fill="#fff"/><rect x="356" y="433" width="1" height="18" fill="#00ff00"/><rect x="355" y="434" width="3" height="8" fill="#00ff00"/><rect x="356" y="435" width="1" height="6" fill="#000"/><rect x="360" y="423" width="1" height="21" fill="#00ff00"/><rect x="359" y="433" width="3" height="4" fill="#00ff00"/><rect x="360" y="434" width="1" height="2" fill="#fff"/><rect x="364" y="429" width="1" height="18" fill="#00ff00"/><rect x="363" y="431" width="3" height="6" fill="#00ff00"/><rect x="364" y="432" width="1" height="4" fill="#000"/><rect x="368" y="406" width="1" height="30" fill="#00ff00"/><rect x="367" y="407" width="3" height="25" fill="#00ff00"/><rect x="368" y="408" width="1" height="23" fill="#000"/><rect x="372" y="404" width="1" height="15" fill="#00ff00"/><rect x="371" y="407" width="3" height="11" fill="#00ff00"/><rect x="372" y="408" width="1" height="9" fill="#fff"/><rect x="376" y="413" width="1" height="17" fill="#00ff00"/><rect x="375" y="417" width="3" height="10" fill="#00ff00"/><rect x="376" y="418" width="1" height="8" fill="#fff"/><rect x="380" y="422" width="1" height="21" fill="#00ff00"/><rect x="379" y="426" width="3" height="1" fill="#00ff00"/><rect x="384" y="423" width="1" height="12" fill="#00ff00"/><rect x="383" y="426" width="3" height="4" fill="#00ff00"/><rect x="384" y="427" width="1" height="2" fill="#fff"/><rect x="388" y="411" width="1" height="21" fill="#00ff00"/><rect x="387" y="412" width="3" height="18" fill="#00ff00"/><rect x="388" y="413" width="1" height="16" fill="#000"/><rect x="392" y="410" width="1" height="27" fill="#00ff00"/><rect x="391" y="412" width="3" height="24" fill="#00ff00"/><rect x="392" y="413" width="1" height="22" fill="#fff"/><rect x="396" y="430" width="1" height="12" fill="#00ff00"/><rect x="395" y="436" width="3" height="1" fill="#00ff00"/><rect x="400" y="432" width="1" height="15" fill="#00ff00"/><rect x="399" y="433" width="3" height="4" fill="#00ff00"/><rect x="400" y="434" width="1" height="2" fill="#000"/><rect x="404" y="421" width="1" height="34" fill="#00ff00"/><rect x="403" y="434" width="3" height="9" fill="#00ff00"/><rect x="404" y="435" width="1" height="7" fill="#fff"/><rect x="408" y="433" width="1" height="12" fill="#00ff00"/><rect x="407" y="437" width="3" height="7" fill="#00ff00"/><rect x="408" y="438" width="1" height="5" fill="#000"/><rect x="412" y="425" width="1" height="18" fill="#00ff00"/><rect x="411" y="427" width="3" height="11" fill="#00ff00"/><rect x="412" y="428" width="1" height="9" fill="#000"/><rect x="416" y="422" width="1" height="14" fill="#00ff00"/><rect x="415" y="426" width="3" height="1" fill="#00ff00"/><rect x="420" y="421" width="1" height="8" fill="#00ff00"/><rect x="419" y="422" width="3" height="5" fill="#00ff00"/><rect x="420" y="423" width="1" height="3" fill="#000"/><rect x="424" y="392" width="1" height="36" fill="#00ff00"/><rect x="423" y="398" width="3" height="26" fill="#00ff00"/><rect x="424" y="399" width="1" height="24" fill="#000"/><rect x="428" y="398" width="1" height="14" fill="#00ff00"/><rect x="427" y="398" width="3" height="2" fill="#00ff00"/><rect x="432" y="398" width="1" height="13" fill="#00ff00"/><rect x="431" y="400" width="3" height="2" fill="#00ff00"/><rect x="436" y="393" width="1" height="14" fill="#00ff00"/><rect x="435" y="396" width="3" height="7" fill="#00ff00"/><rect x="436" y="397" width="1" height="5" fill="#000"/><rect x="440" y="397" width="1" height="12" fill="#00ff00"/><rect x="439" y="397" width="3" height="5" fill="#00ff00"/><rect x="440" y="398" width="1" height="3" fill="#fff"/><rect x="444" y="400" width="1" height="9" fill="#00ff00"/><rect x="443" y="404" width="3" height="1" fill="#00ff00"/><rect x="448" y="402" width="1" height="11" fill="#00ff00"/><rect x="447" y="404" width="3" height="3" fill="#00ff00"/><rect x="448" y="405" width="1" height="1" fill="#fff"/><rect x="452" y="401" width="1" height="17" fill="#00ff00"/><rect x="451" y="402" width="3" height="5" fill="#00ff00"/><rect x="452" y="403" width="1" height="3" fill="#000"/><rect x="456" y="396" width="1" height="13" fill="#00ff00"/><rect x="455" y="403" width="3" height="3" fill="#00ff00"/><rect x="456" y="404" width="1" height="1" fill="#fff"/><rect x="460" y="400" width="1" height="12" fill="#00ff00"/><rect x="459" y="406" width="3" height="3" fill="#00ff00"/><rect x="460" y="407" width="1" height="1" fill="#fff"/><rect x="464" y="409" width="1" height="26" fill="#00ff00"/><rect x="463" y="409" width="3" height="24" fill="#00ff00"/><rect x="464" y="410" width="1" height="22" fill="#fff"/><rect x="468" y="413" width="1" height="20" fill="#00ff00"/><rect x="467" y="414" width="3" height="16" fill="#00ff00"/><rect x="468" y="415" width="1" height="14" fill="#000"/><rect x="472" y="395" width="1" height="22" fill="#00ff00"/><rect x="471" y="397" width="3" height="17" fill="#00ff00"/><rect x="472" y="398" width="1" height="15" fill="#000"/><rect x="476" y="396" width="1" height="21" fill="#00ff00"/><rect x="475" y="397" width="3" height="20" fill="#00ff00"/><rect x="476" y="398" width="1" height="18" fill="#fff"/><rect x="480" y="415" width="1" height="12" fill="#00ff00"/><rect x="479" y="415" width="3" height="7" fill="#00ff00"/><rect x="480" y="416" width="1" height="5" fill="#fff"/><rect x="484" y="421" width="1" height="8" fill="#00ff00"/><rect x="483" y="421" width="3" height="6" fill="#00ff00"/><rect x="484" y="422" width="1" height="4" fill="#fff"/><rect x="488" y="419" width="1" height="8" fill="#00ff00"/><rect x="487" y="422" width="3" height="5" fill="#00ff00"/><rect x="488" y="423" width="1" height="3" fill="#000"/><rect x="492" y="422" width="1" height="8" fill="#00ff00"/><rect x="491" y="422" width="3" height="7" fill="#00ff00"/><rect x="492" y="423" width="1" height="5" fill="#fff"/><rect x="496" y="421" width="1" height="11" fill="#00ff00"/><rect x="495" y="422" width="3" height="10" fill="#00ff00"/><rect x="496" y="423" width="1" height="8" fill="#000"/><rect x="500" y="416" width="1" height="9" fill="#00ff00"/><rect x="499" y="420" width="3" height="3" fill="#00ff00"/><rect x="500" y="421" width="1" height="1" fill="#000"/><rect x="504" y="414" width="1" height="8" fill="#00ff00"/><rect x="503" y="414" width="3" height="8" fill="#00ff00"/><rect x="504" y="415" width="1" height="6" fill="#000"/><rect x="508" y="412" width="1" height="15" fill="#00ff00"/><rect x="507" y="415" width="3" height="12" fill="#00ff00"/><rect x="508" y="416" width="1" height="10" fill="#fff"/><rect x="512" y="421" width="1" height="11" fill="#00ff00"/><rect x="511" y="426" width="3" height="5" fill="#00ff00"/><rect x="512" y="427" width="1" height="3" fill="#fff"/><rect x="516" y="426" width="1" height="5" fill="#00ff00"/><rect x="515" y="428" width="3" height="3" fill="#00ff00"/><rect x="516" y="429" width="1" height="1" fill="#000"/><rect x="520" y="426" width="1" height="16" fill="#00ff00"/><rect x="519" y="428" width="3" height="14" fill="#00ff00"/><rect x="520" y="429" width="1" height="12" fill="#fff"/><rect x="524" y="439" width="1" height="3" fill="#00ff00"/><rect x="523" y="439" width="3" height="3" fill="#00ff00"/><rect x="524" y="440" width="1" height="1" fill="#000"/><rect x="528" y="430" width="1" height="11" fill="#00ff00"/><rect x="527" y="435" width="3" height="6" fill="#00ff00"/><rect x="528" y="436" width="1" height="4" fill="#000"/><rect x="532" y="423" width="1" height="13" fill="#00ff00"/><rect x="531" y="433" width="3" height="2" fill="#00ff00"/><rect x="536" y="433" width="1" height="3" fill="#00ff00"/><rect x="535" y="433" width="3" height="3" fill="#00ff00"/><rect x="536" y="434" width="1" height="1" fill="#fff"/><rect x="540" y="429" width="1" height="7" fill="#00ff00"/><rect x="539" y="429" width="3" height="7" fill="#00ff00"/><rect x="540" y="430" width="1" height="5" fill="#000"/><rect x="544" y="431" width="1" height="5" fill="#00ff00"/><rect x="543" y="432" width="3" height="3" fill="#00ff00"/><rect x="544" y="433" width="1" height="1" fill="#fff"/><rect x="548" y="424" width="1" height="11" fill="#00ff00"/><rect x="547" y="426" width="3" height="8" fill="#00ff00"/><rect x="548" y="427" width="1" height="6" fill="#000"/><rect x="552" y="422" width="1" height="13" fill="#00ff00"/><rect x="551" y="427" width="3" height="3" fill="#00ff00"/><rect x="552" y="428" width="1" height="1" fill="#fff"/><rect x="556" y="426" width="1" height="6" fill="#00ff00"/><rect x="555" y="427" width="3" height="2" fill="#00ff00"/><rect x="560" y="424" width="1" height="3" fill="#00ff00"/><rect x="559" y="424" width="3" height="3" fill="#00ff00"/><rect x="560" y="425" width="1" height="1" fill="#000"/><rect x="564" y="423" width="1" height="2" fill="#00ff00"/><rect x="563" y="424" width="3" height="1" fill="#00ff00"/><rect x="568" y="424" width="1" height="1" fill="#00ff00"/><rect x="567" y="424" width="3" height="1" fill="#00ff00"/><rect x="572" y="418" width="1" height="9" fill="#00ff00"/><rect x="571" y="420" width="3" height="6" fill="#00ff00"/><rect x="572" y="421" width="1" height="4" fill="#000"/><rect x="576" y="417" width="1" height="6" fill="#00ff00"/><rect x="575" y="418" width="3" height="3" fill="#00ff00"/><rect x="576" y="419" width="1" height="1" fill="#000"/><rect x="580" y="414" width="1" height="6" fill="#00ff00"/><rect x="579" y="414" width="3" height="4" fill="#00ff00"/><rect x="580" y="415" width="1" height="2" fill="#000"/><rect x="584" y="414" width="1" height="4" fill="#00ff00"/><rect x="583" y="415" width="3" height="2" fill="#00ff00"/><rect x="588" y="410" width="1" height="8" fill="#00ff00"/><rect x="587" y="410" width="3" height="7" fill="#00ff00"/><rect x="588" y="411" width="1" height="5" fill="#000"/><rect x="592" y="410" width="1" height="11" fill="#00ff00"/><rect x="591" y="410" width="3" height="11" fill="#00ff00"/><rect x="592" y="411" width="1" height="9" fill="#fff"/><rect x="596" y="414" width="1" height="7" fill="#00ff00"/><rect x="595" y="414" width="3" height="7" fill="#00ff00"/><rect x="596" y="415" width="1" height="5" fill="#000"/><rect x="600" y="412" width="1" height="5" fill="#00ff00"/><rect x="599" y="415" width="3" height="1" fill="#00ff00"/><rect x="604" y="410" width="1" height="6" fill="#00ff00"/><rect x="603" y="413" width="3" height="2" fill="#00ff00"/><rect x="608" y="406" width="1" height="12" fill="#00ff00"/><rect x="607" y="413" width="3" height="3" fill="#00ff00"/><rect x="608" y="414" width="1" height="1" fill="#fff"/><rect x="612" y="406" width="1" height="11" fill="#00ff00"/><rect x="611" y="407" width="3" height="9" fill="#00ff00"/><rect x="612" y="408" width="1" height="7" fill="#000"/><rect x="616" y="405" width="1" height="12" fill="#00ff00"/><rect x="615" y="407" width="3" height="10" fill="#00ff00"/><rect x="616" y="408" width="1" height="8" fill="#fff"/><rect x="620" y="412" width="1" height="5" fill="#00ff00"/><rect x="619" y="414" width="3" height="3" fill="#00ff00"/><rect x="620" y="415" width="1" height="1" fill="#000"/><rect x="624" y="400" width="1" height="16" fill="#00ff00"/><rect x="623" y="400" width="3" height="15" fill="#00ff00"/><rect x="624" y="401" width="1" height="13" fill="#000"/><rect x="628" y="395" width="1" height="10" fill="#00ff00"/><rect x="627" y="395" width="3" height="6" fill="#00ff00"/><rect x="628" y="396" width="1" height="4" fill="#000"/><rect x="632" y="386" width="1" height="10" fill="#00ff00"/><rect x="631" y="391" width="3" height="5" fill="#00ff00"/><rect x="632" y="392" width="1" height="3" fill="#000"/><rect x="636" y="385" width="1" height="9" fill="#00ff00"/><rect x="635" y="387" width="3" height="5" fill="#00ff00"/><rect x="636" y="388" width="1" height="3" fill="#000"/><rect x="640" y="372" width="1" height="18" fill="#00ff00"/><rect x="639" y="376" width="3" height="11" fill="#00ff00"/><rect x="640" y="377" width="1" height="9" fill="#000"/><rect x="644" y="375" width="1" height="19" fill="#00ff00"/><rect x="643" y="375" width="3" height="9" fill="#00ff00"/><rect x="644" y="376" width="1" height="7" fill="#fff"/><rect x="648" y="371" width="1" height="19" fill="#00ff00"/><rect x="647" y="378" width="3" height="8" fill="#00ff00"/><rect x="648" y="379" width="1" height="6" fill="#000"/><rect x="652" y="370" width="1" height="13" fill="#00ff00"/><rect x="651" y="375" width="3" height="3" fill="#00ff00"/><rect x="652" y="376" width="1" height="1" fill="#000"/><rect x="656" y="374" width="1" height="10" fill="#00ff00"/><rect x="655" y="375" width="3" height="2" fill="#00ff00"/><rect x="660" y="373" width="1" height="10" fill="#00ff00"/><rect x="659" y="375" width="3" height="6" fill="#00ff00"/><rect x="660" y="376" width="1" height="4" fill="#fff"/><rect x="664" y="381" width="1" height="7" fill="#00ff00"/><rect x="663" y="382" width="3" height="2" fill="#00ff00"/><rect x="668" y="381" width="1" height="10" fill="#00ff00"/><rect x="667" y="383" width="3" height="5" fill="#00ff00"/><rect x="668" y="384" width="1" height="3" fill="#fff"/><rect x="672" y="381" width="1" height="7" fill="#00ff00"/><rect x="671" y="381" width="3" height="7" fill="#00ff00"/><rect x="672" y="382" width="1" height="5" fill="#000"/><rect x="676" y="377" width="1" height="7" fill="#00ff00"/><rect x="675" y="380" width="3" height="2" fill="#00ff00"/><rect x="680" y="379" width="1" height="11" fill="#00ff00"/><rect x="679" y="379" width="3" height="7" fill="#00ff00"/><rect x="680" y="380" width="1" height="5" fill="#fff"/><rect x="684" y="374" width="1" height="12" fill="#00ff00"/><rect x="683" y="378" width="3" height="8" fill="#00ff00"/><rect x="684" y="379" width="1" height="6" fill="#000"/><rect x="688" y="377" width="1" height="5" fill="#00ff00"/><rect x="687" y="378" width="3" height="1" fill="#00ff00"/><rect x="692" y="372" width="1" height="8" fill="#00ff00"/><rect x="691" y="373" width="3" height="6" fill="#00ff00"/><rect x="692" y="374" width="1" height="4" fill="#000"/><rect x="696" y="372" width="1" height="7" fill="#00ff00"/><rect x="695" y="372" width="3" height="2" fill="#00ff00"/><rect x="700" y="371" width="1" height="12" fill="#00ff00"/><rect x="699" y="372" width="3" height="7" fill="#00ff00"/><rect x="700" y="373" width="1" height="5" fill="#fff"/><rect x="704" y="379" width="1" height="7" fill="#00ff00"/><rect x="703" y="379" width="3" height="2" fill="#00ff00"/><rect x="708" y="378" width="1" height="5" fill="#00ff00"/><rect x="707" y="380" width="3" height="2" fill="#00ff00"/><rect x="712" y="374" width="1" height="9" fill="#00ff00"/><rect x="711" y="381" width="3" height="1" fill="#00ff00"/><rect x="716" y="376" width="1" height="7" fill="#00ff00"/><rect x="715" y="376" width="3" height="5" fill="#00ff00"/><rect x="716" y="377" width="1" height="3" fill="#000"/><rect x="720" y="368" width="1" height="9" fill="#00ff00"/><rect x="719" y="372" width="3" height="4" fill="#00ff00"/><rect x="720" y="373" width="1" height="2" fill="#000"/><rect x="724" y="371" width="1" height="10" fill="#00ff00"/><rect x="723" y="372" width="3" height="7" fill="#00ff00"/><rect x="724" y="373" width="1" height="5" fill="#fff"/><rect x="728" y="371" width="1" height="8" fill="#00ff00"/><rect x="727" y="371" width="3" height="8" fill="#00ff00"/><rect x="728" y="372" width="1" height="6" fill="#000"/><rect x="732" y="367" width="1" height="7" fill="#00ff00"/><rect x="731" y="368" width="3" height="4" fill="#00ff00"/><rect x="732" y="369" width="1" height="2" fill="#000"/><rect x="736" y="368" width="1" height="8" fill="#00ff00"/><rect x="735" y="368" width="3" height="3" fill="#00ff00"/><rect x="736" y="369" width="1" height="1" fill="#fff"/><rect x="740" y="370" width="1" height="7" fill="#00ff00"/><rect x="739" y="371" width="3" height="1" fill="#00ff00"/><rect x="744" y="371" width="1" height="6" fill="#00ff00"/><rect x="743" y="371" width="3" height="6" fill="#00ff00"/><rect x="744" y="372" width="1" height="4" fill="#fff"/><rect x="748" y="374" width="1" height="5" fill="#00ff00"/><rect x="747" y="376" width="3" height="2" fill="#00ff00"/><rect x="752" y="371" width="1" height="8" fill="#00ff00"/><rect x="751" y="374" width="3" height="5" fill="#00ff00"/><rect x="752" y="375" width="1" height="3" fill="#000"/><rect x="756" y="373" width="1" height="18" fill="#00ff00"/><rect x="755" y="373" width="3" height="18" fill="#00ff00"/><rect x="756" y="374" width="1" height="16" fill="#fff"/><rect x="760" y="383" width="1" height="8" fill="#00ff00"/><rect x="759" y="385" width="3" height="6" fill="#00ff00"/><rect x="760" y="386" width="1" height="4" fill="#000"/><rect x="764" y="382" width="1" height="9" fill="#00ff00"/><rect x="763" y="384" width="3" height="4" fill="#00ff00"/><rect x="764" y="385" width="1" height="2" fill="#fff"/><rect x="768" y="383" width="1" height="7" fill="#00ff00"/><rect x="767" y="383" width="3" height="5" fill="#00ff00"/><rect x="768" y="384" width="1" height="3" fill="#000"/><rect x="772" y="381" width="1" height="6" fill="#00ff00"/><rect x="771" y="383" width="3" height="3" fill="#00ff00"/><rect x="772" y="384" width="1" height="1" fill="#fff"/><rect x="776" y="384" width="1" height="5" fill="#00ff00"/><rect x="775" y="385" width="3" height="1" fill="#00ff00"/><rect x="780" y="381" width="1" height="7" fill="#00ff00"/><rect x="779" y="382" width="3" height="4" fill="#00ff00"/><rect x="780" y="383" width="1" height="2" fill="#000"/><rect x="784" y="379" width="1" height="8" fill="#00ff00"/><rect x="783" y="383" width="3" height="1" fill="#00ff00"/><rect x="788" y="375" width="1" height="9" fill="#00ff00"/><rect x="787" y="376" width="3" height="8" fill="#00ff00"/><rect x="788" y="377" width="1" height="6" fill="#000"/><rect x="792" y="376" width="1" height="12" fill="#00ff00"/><rect x="791" y="376" width="3" height="12" fill="#00ff00"/><rect x="792" y="377" width="1" height="10" fill="#fff"/><rect x="796" y="386" width="1" height="15" fill="#00ff00"/><rect x="795" y="387" width="3" height="10" fill="#00ff00"/><rect x="796" y="388" width="1" height="8" fill="#fff"/><rect x="800" y="389" width="1" height="10" fill="#00ff00"/><rect x="799" y="394" width="3" height="3" fill="#00ff00"/><rect x="800" y="395" width="1" height="1" fill="#000"/><rect x="804" y="393" width="1" height="9" fill="#00ff00"/><rect x="803" y="394" width="3" height="1" fill="#00ff00"/><rect x="808" y="391" width="1" height="12" fill="#00ff00"/><rect x="807" y="393" width="3" height="6" fill="#00ff00"/><rect x="808" y="394" width="1" height="4" fill="#fff"/><rect x="812" y="390" width="1" height="10" fill="#00ff00"/><rect x="811" y="395" width="3" height="4" fill="#00ff00"/><rect x="812" y="396" width="1" height="2" fill="#000"/><rect x="816" y="393" width="1" height="6" fill="#00ff00"/><rect x="815" y="397" width="3" height="1" fill="#00ff00"/><rect x="820" y="397" width="1" height="6" fill="#00ff00"/><rect x="819" y="397" width="3" height="2" fill="#00ff00"/><rect x="824" y="398" width="1" height="11" fill="#00ff00"/><rect x="823" y="399" width="3" height="6" fill="#00ff00"/><rect x="824" y="400" width="1" height="4" fill="#fff"/><rect x="828" y="393" width="1" height="13" fill="#00ff00"/><rect x="827" y="393" width="3" height="12" fill="#00ff00"/><rect x="828" y="394" width="1" height="10" fill="#000"/><rect x="832" y="394" width="1" height="12" fill="#00ff00"/><rect x="831" y="394" width="3" height="11" fill="#00ff00"/><rect x="832" y="395" width="1" height="9" fill="#fff"/><rect x="836" y="403" width="1" height="9" fill="#00ff00"/><rect x="835" y="405" width="3" height="7" fill="#00ff00"/><rect x="836" y="406" width="1" height="5" fill="#fff"/><rect x="840" y="402" width="1" height="11" fill="#00ff00"/><rect x="839" y="404" width="3" height="9" fill="#00ff00"/><rect x="840" y="405" width="1" height="7" fill="#000"/><rect x="844" y="402" width="1" height="4" fill="#00ff00"/><rect x="843" y="404" width="3" height="1" fill="#00ff00"/><rect x="848" y="401" width="1" height="6" fill="#00ff00"/><rect x="847" y="403" width="3" height="2" fill="#00ff00"/><rect x="852" y="400" width="1" height="6" fill="#00ff00"/><rect x="851" y="401" width="3" height="5" fill="#00ff00"/><rect x="852" y="402" width="1" height="3" fill="#000"/><rect x="856" y="397" width="1" height="7" fill="#00ff00"/><rect x="855" y="398" width="3" height="5" fill="#00ff00"/><rect x="856" y="399" width="1" height="3" fill="#000"/><rect x="860" y="398" width="1" height="7" fill="#00ff00"/><rect x="859" y="399" width="3" height="3" fill="#00ff00"/><rect x="860" y="400" width="1" height="1" fill="#fff"/><rect x="864" y="400" width="1" height="4" fill="#00ff00"/><rect x="863" y="403" width="3" height="1" fill="#00ff00"/><rect x="868" y="394" width="1" height="9" fill="#00ff00"/><rect x="867" y="394" width="3" height="8" fill="#00ff00"/><rect x="868" y="395" width="1" height="6" fill="#000"/><rect x="872" y="393" width="1" height="4" fill="#00ff00"/><rect x="871" y="394" width="3" height="3" fill="#00ff00"/><rect x="872" y="395" width="1" height="1" fill="#000"/><rect x="876" y="382" width="1" height="17" fill="#00ff00"/><rect x="875" y="382" width="3" height="13" fill="#00ff00"/><rect x="876" y="383" width="1" height="11" fill="#000"/><rect x="880" y="381" width="1" height="9" fill="#00ff00"/><rect x="879" y="383" width="3" height="3" fill="#00ff00"/><rect x="880" y="384" width="1" height="1" fill="#fff"/><rect x="884" y="374" width="1" height="12" fill="#00ff00"/><rect x="883" y="375" width="3" height="11" fill="#00ff00"/><rect x="884" y="376" width="1" height="9" fill="#000"/><rect x="888" y="374" width="1" height="10" fill="#00ff00"/><rect x="887" y="377" width="3" height="1" fill="#00ff00"/><rect x="892" y="371" width="1" height="8" fill="#00ff00"/><rect x="891" y="373" width="3" height="3" fill="#00ff00"/><rect x="892" y="374" width="1" height="1" fill="#000"/><rect x="896" y="371" width="1" height="8" fill="#00ff00"/><rect x="895" y="373" width="3" height="6" fill="#00ff00"/><rect x="896" y="374" width="1" height="4" fill="#fff"/><rect x="900" y="374" width="1" height="5" fill="#00ff00"/><rect x="899" y="376" width="3" height="2" fill="#00ff00"/><rect x="904" y="371" width="1" height="7" fill="#00ff00"/><rect x="903" y="372" width="3" height="5" fill="#00ff00"/><rect x="904" y="373" width="1" height="3" fill="#000"/><rect x="908" y="372" width="1" height="14" fill="#00ff00"/><rect x="907" y="372" width="3" height="14" fill="#00ff00"/><rect x="908" y="373" width="1" height="12" fill="#fff"/><rect x="912" y="383" width="1" height="12" fill="#00ff00"/><rect x="911" y="384" width="3" height="8" fill="#00ff00"/><rect x="912" y="385" width="1" height="6" fill="#fff"/><rect x="916" y="389" width="1" height="7" fill="#00ff00"/><rect x="915" y="391" width="3" height="3" fill="#00ff00"/><rect x="916" y="392" width="1" height="1" fill="#fff"/><rect x="920" y="389" width="1" height="13" fill="#00ff00"/><rect x="919" y="393" width="3" height="9" fill="#00ff00"/><rect x="920" y="394" width="1" height="7" fill="#fff"/><rect x="924" y="398" width="1" height="6" fill="#00ff00"/><rect x="923" y="400" width="3" height="4" fill="#00ff00"/><rect x="924" y="401" width="1" height="2" fill="#fff"/><rect x="928" y="399" width="1" height="17" fill="#00ff00"/><rect x="927" y="403" width="3" height="11" fill="#00ff00"/><rect x="928" y="404" width="1" height="9" fill="#fff"/><rect x="932" y="404" width="1" height="9" fill="#00ff00"/><rect x="931" y="407" width="3" height="6" fill="#00ff00"/><rect x="932" y="408" width="1" height="4" fill="#000"/><rect x="936" y="407" width="1" height="6" fill="#00ff00"/><rect x="935" y="407" width="3" height="3" fill="#00ff00"/><rect x="936" y="408" width="1" height="1" fill="#fff"/><rect x="940" y="397" width="1" height="13" fill="#00ff00"/><rect x="939" y="397" width="3" height="13" fill="#00ff00"/><rect x="940" y="398" width="1" height="11" fill="#000"/><rect x="944" y="391" width="1" height="8" fill="#00ff00"/><rect x="943" y="392" width="3" height="7" fill="#00ff00"/><rect x="944" y="393" width="1" height="5" fill="#000"/><rect x="948" y="372" width="1" height="22" fill="#00ff00"/><rect x="947" y="379" width="3" height="14" fill="#00ff00"/><rect x="948" y="380" width="1" height="12" fill="#000"/><rect x="952" y="372" width="1" height="20" fill="#00ff00"/><rect x="951" y="379" width="3" height="12" fill="#00ff00"/><rect x="952" y="380" width="1" height="10" fill="#fff"/><rect x="956" y="388" width="1" height="17" fill="#00ff00"/><rect x="955" y="390" width="3" height="12" fill="#00ff00"/><rect x="956" y="391" width="1" height="10" fill="#fff"/><rect x="960" y="395" width="1" height="15" fill="#00ff00"/><rect x="959" y="400" width="3" height="2" fill="#00ff00"/><rect x="964" y="397" width="1" height="12" fill="#00ff00"/><rect x="963" y="400" width="3" height="3" fill="#00ff00"/><rect x="964" y="401" width="1" height="1" fill="#fff"/><rect x="968" y="393" width="1" height="17" fill="#00ff00"/><rect x="967" y="395" width="3" height="8" fill="#00ff00"/><rect x="968" y="396" width="1" height="6" fill="#000"/><rect x="972" y="372" width="1" height="25" fill="#00ff00"/><rect x="971" y="393" width="3" height="4" fill="#00ff00"/><rect x="972" y="394" width="1" height="2" fill="#000"/><rect x="976" y="381" width="1" height="15" fill="#00ff00"/><rect x="975" y="382" width="3" height="10" fill="#00ff00"/><rect x="976" y="383" width="1" height="8" fill="#000"/><rect x="980" y="381" width="1" height="30" fill="#00ff00"/><rect x="979" y="381" width="3" height="25" fill="#00ff00"/><rect x="980" y="382" width="1" height="23" fill="#fff"/><rect x="984" y="404" width="1" height="39" fill="#00ff00"/><rect x="983" y="405" width="3" height="22" fill="#00ff00"/><rect x="984" y="406" width="1" height="20" fill="#fff"/><rect x="988" y="412" width="1" height="17" fill="#00ff00"/><rect x="987" y="417" width="3" height="11" fill="#00ff00"/><rect x="988" y="418" width="1" height="9" fill="#000"/><rect x="992" y="390" width="1" height="41" fill="#00ff00"/><rect x="991" y="399" width="3" height="19" fill="#00ff00"/><rect x="992" y="400" width="1" height="17" fill="#000"/><rect x="996" y="392" width="1" height="15" fill="#00ff00"/><rect x="995" y="395" width="3" height="4" fill="#00ff00"/><rect x="996" y="396" width="1" height="2" fill="#000"/><rect x="1000" y="383" width="1" height="28" fill="#00ff00"/><rect x="999" y="394" width="3" height="14" fill="#00ff00"/><rect x="1000" y="395" width="1" height="12" fill="#fff"/><rect x="1004" y="386" width="1" height="33" fill="#00ff00"/><rect x="1003" y="397" width="3" height="11" fill="#00ff00"/><rect x="1004" y="398" width="1" height="9" fill="#000"/><rect x="1008" y="395" width="1" height="43" fill="#00ff00"/><rect x="1007" y="396" width="3" height="33" fill="#00ff00"/><rect x="1008" y="397" width="1" height="31" fill="#fff"/><rect x="1012" y="419" width="1" height="23" fill="#00ff00"/><rect x="1011" y="424" width="3" height="5" fill="#00ff00"/><rect x="1012" y="425" width="1" height="3" fill="#000"/><rect x="1016" y="412" width="1" height="19" fill="#00ff00"/><rect x="1015" y="415" width="3" height="10" fill="#00ff00"/><rect x="1016" y="416" width="1" height="8" fill="#000"/><rect x="1020" y="381" width="1" height="38" fill="#00ff00"/><rect x="1019" y="391" width="3" height="25" fill="#00ff00"/><rect x="1020" y="392" width="1" height="23" fill="#000"/><rect x="1024" y="387" width="1" height="40" fill="#00ff00"/><rect x="1023" y="390" width="3" height="37" fill="#00ff00"/><rect x="1024" y="391" width="1" height="35" fill="#fff"/><rect x="1028" y="411" width="1" height="31" fill="#00ff00"/><rect x="1027" y="412" width="3" height="15" fill="#00ff00"/><rect x="1028" y="413" width="1" height="13" fill="#000"/><rect x="1032" y="399" width="1" height="25" fill="#00ff00"/><rect x="1031" y="399" width="3" height="14" fill="#00ff00"/><rect x="1032" y="400" width="1" height="12" fill="#000"/><rect x="1036" y="385" width="1" height="20" fill="#00ff00"/><rect x="1035" y="389" width="3" height="10" fill="#00ff00"/><rect x="1036" y="390" width="1" height="8" fill="#000"/><rect x="1040" y="380" width="1" height="18" fill="#00ff00"/><rect x="1039" y="381" width="3" height="8" fill="#00ff00"/><rect x="1040" y="382" width="1" height="6" fill="#000"/><rect x="1044" y="371" width="1" height="30" fill="#00ff00"/><rect x="1043" y="380" width="3" height="17" fill="#00ff00"/><rect x="1044" y="381" width="1" height="15" fill="#fff"/><rect x="1048" y="389" width="1" height="30" fill="#00ff00"/><rect x="1047" y="397" width="3" height="17" fill="#00ff00"/><rect x="1048" y="398" width="1" height="15" fill="#fff"/><rect x="1052" y="404" width="1" height="21" fill="#00ff00"/><rect x="1051" y="414" width="3" height="8" fill="#00ff00"/><rect x="1052" y="415" width="1" height="6" fill="#fff"/><rect x="1056" y="401" width="1" height="24" fill="#00ff00"/><rect x="1055" y="404" width="3" height="19" fill="#00ff00"/><rect x="1056" y="405" width="1" height="17" fill="#000"/><rect x="1060" y="400" width="1" height="17" fill="#00ff00"/><rect x="1059" y="404" width="3" height="7" fill="#00ff00"/><rect x="1060" y="405" width="1" height="5" fill="#fff"/><rect x="1064" y="403" width="1" height="11" fill="#00ff00"/><rect x="1063" y="410" width="3" height="3" fill="#00ff00"/><rect x="1064" y="411" width="1" height="1" fill="#fff"/><rect x="1068" y="393" width="1" height="21" fill="#00ff00"/><rect x="1067" y="393" width="3" height="21" fill="#00ff00"/><rect x="1068" y="394" width="1" height="19" fill="#000"/><rect x="1072" y="391" width="1" height="12" fill="#00ff00"/><rect x="1071" y="391" width="3" height="5" fill="#00ff00"/><rect x="1072" y="392" width="1" height="3" fill="#fff"/><rect x="1076" y="384" width="1" height="16" fill="#00ff00"/><rect x="1075" y="388" width="3" height="8" fill="#00ff00"/><rect x="1076" y="389" width="1" height="6" fill="#000"/><rect x="1080" y="377" width="1" height="16" fill="#00ff00"/><rect x="1079" y="377" width="3" height="11" fill="#00ff00"/><rect x="1080" y="378" width="1" height="9" fill="#000"/><rect x="1084" y="376" width="1" height="15" fill="#00ff00"/><rect x="1083" y="377" width="3" height="2" fill="#00ff00"/><rect x="1088" y="358" width="1" height="21" fill="#00ff00"/><rect x="1087" y="363" width="3" height="15" fill="#00ff00"/><rect x="1088" y="364" width="1" height="13" fill="#000"/><rect x="1092" y="354" width="1" height="17" fill="#00ff00"/><rect x="1091" y="363" width="3" height="7" fill="#00ff00"/><rect x="1092" y="364" width="1" height="5" fill="#fff"/><rect x="1096" y="362" width="1" height="12" fill="#00ff00"/><rect x="1095" y="369" width="3" height="2" fill="#00ff00"/><rect x="1100" y="360" width="1" height="15" fill="#00ff00"/><rect x="1099" y="361" width="3" height="10" fill="#00ff00"/><rect x="1100" y="362" width="1" height="8" fill="#000"/><rect x="1104" y="351" width="1" height="15" fill="#00ff00"/><rect x="1103" y="362" width="3" height="2" fill="#00ff00"/><rect x="1108" y="358" width="1" height="12" fill="#00ff00"/><rect x="1107" y="362" width="3" height="7" fill="#00ff00"/><rect x="1108" y="363" width="1" height="5" fill="#fff"/><rect x="1112" y="367" width="1" height="17" fill="#00ff00"/><rect x="1111" y="369" width="3" height="5" fill="#00ff00"/><rect x="1112" y="370" width="1" height="3" fill="#fff"/><rect x="1116" y="360" width="1" height="20" fill="#00ff00"/><rect x="1115" y="368" width="3" height="6" fill="#00ff00"/><rect x="1116" y="369" width="1" height="4" fill="#000"/><rect x="1120" y="361" width="1" height="11" fill="#00ff00"/><rect x="1119" y="366" width="3" height="2" fill="#00ff00"/><rect x="1124" y="363" width="1" height="7" fill="#00ff00"/><rect x="1123" y="363" width="3" height="4" fill="#00ff00"/><rect x="1124" y="364" width="1" height="2" fill="#000"/><rect x="1128" y="357" width="1" height="13" fill="#00ff00"/><rect x="1127" y="363" width="3" height="6" fill="#00ff00"/><rect x="1128" y="364" width="1" height="4" fill="#fff"/><rect x="1132" y="363" width="1" height="12" fill="#00ff00"/><rect x="1131" y="367" width="3" height="2" fill="#00ff00"/><rect x="1136" y="363" width="1" height="8" fill="#00ff00"/><rect x="1135" y="365" width="3" height="6" fill="#00ff00"/><rect x="1136" y="366" width="1" height="4" fill="#fff"/><rect x="1140" y="358" width="1" height="16" fill="#00ff00"/><rect x="1139" y="363" width="3" height="7" fill="#00ff00"/><rect x="1140" y="364" width="1" height="5" fill="#000"/><rect x="1144" y="358" width="1" height="11" fill="#00ff00"/><rect x="1143" y="363" width="3" height="2" fill="#00ff00"/><rect x="1148" y="354" width="1" height="18" fill="#00ff00"/><rect x="1147" y="363" width="3" height="8" fill="#00ff00"/><rect x="1148" y="364" width="1" height="6" fill="#fff"/><rect x="1152" y="367" width="1" height="9" fill="#00ff00"/><rect x="1151" y="370" width="3" height="2" fill="#00ff00"/><rect x="1156" y="361" width="1" height="20" fill="#00ff00"/><rect x="1155" y="361" width="3" height="10" fill="#00ff00"/><rect x="1156" y="362" width="1" height="8" fill="#000"/><rect x="1160" y="358" width="1" height="13" fill="#00ff00"/><rect x="1159" y="361" width="3" height="7" fill="#00ff00"/><rect x="1160" y="362" width="1" height="5" fill="#fff"/><rect x="1164" y="354" width="1" height="18" fill="#00ff00"/><rect x="1163" y="363" width="3" height="5" fill="#00ff00"/><rect x="1164" y="364" width="1" height="3" fill="#000"/><rect x="1168" y="358" width="1" height="14" fill="#00ff00"/><rect x="1167" y="363" width="3" height="3" fill="#00ff00"/><rect x="1168" y="364" width="1" height="1" fill="#fff"/><rect x="1172" y="359" width="1" height="15" fill="#00ff00"/><rect x="1171" y="365" width="3" height="7" fill="#00ff00"/><rect x="1172" y="366" width="1" height="5" fill="#fff"/><rect x="1176" y="369" width="1" height="11" fill="#00ff00"/><rect x="1175" y="371" width="3" height="2" fill="#00ff00"/><rect x="1180" y="371" width="1" height="19" fill="#00ff00"/><rect x="1179" y="372" width="3" height="16" fill="#00ff00"/><rect x="1180" y="373" width="1" height="14" fill="#fff"/><rect x="1184" y="367" width="1" height="21" fill="#00ff00"/><rect x="1183" y="370" width="3" height="18" fill="#00ff00"/><rect x="1184" y="371" width="1" height="16" fill="#000"/><rect x="1188" y="361" width="1" height="11" fill="#00ff00"/><rect x="1187" y="365" width="3" height="5" fill="#00ff00"/><rect x="1188" y="366" width="1" height="3" fill="#000"/><rect x="1192" y="357" width="1" height="11" fill="#00ff00"/><rect x="1191" y="365" width="3" height="1" fill="#00ff00"/><rect x="1196" y="362" width="1" height="14" fill="#00ff00"/><rect x="1195" y="365" width="3" height="9" fill="#00ff00"/><rect x="1196" y="366" width="1" height="7" fill="#fff"/><rect x="1200" y="365" width="1" height="27" fill="#00ff00"/><rect x="1199" y="374" width="3" height="17" fill="#00ff00"/><rect x="1200" y="375" width="1" height="15" fill="#fff"/><rect x="1204" y="379" width="1" height="17" fill="#00ff00"/><rect x="1203" y="381" width="3" height="10" fill="#00ff00"/><rect x="1204" y="382" width="1" height="8" fill="#000"/><rect x="1208" y="371" width="1" height="15" fill="#00ff00"/><rect x="1207" y="380" width="3" height="1" fill="#00ff00"/><rect x="1212" y="376" width="1" height="17" fill="#00ff00"/><rect x="1211" y="379" width="3" height="3" fill="#00ff00"/><rect x="1212" y="380" width="1" height="1" fill="#fff"/><rect x="1216" y="381" width="1" height="11" fill="#00ff00"/><rect x="1215" y="382" width="3" height="6" fill="#00ff00"/><rect x="1216" y="383" width="1" height="4" fill="#fff"/><rect x="1220" y="385" width="1" height="18" fill="#00ff00"/><rect x="1219" y="386" width="3" height="15" fill="#00ff00"/><rect x="1220" y="387" width="1" height="13" fill="#fff"/><rect x="1224" y="295" width="1" height="108" fill="#00ff00"/><rect x="1223" y="303" width="3" height="98" fill="#00ff00"/><rect x="1224" y="304" width="1" height="96" fill="#000"/><rect x="1228" y="258" width="1" height="46" fill="#00ff00"/><rect x="1227" y="268" width="3" height="36" fill="#00ff00"/><rect x="1228" y="269" width="1" height="34" fill="#000"/><rect x="1232" y="248" width="1" height="32" fill="#00ff00"/><rect x="1231" y="267" width="3" height="11" fill="#00ff00"/><rect x="1232" y="268" width="1" height="9" fill="#fff"/><rect x="1236" y="277" width="1" height="96" fill="#00ff00"/><rect x="1235" y="278" width="3" height="63" fill="#00ff00"/><rect x="1236" y="279" width="1" height="61" fill="#fff"/><rect x="1240" y="326" width="1" height="32" fill="#00ff00"/><rect x="1239" y="340" width="3" height="2" fill="#00ff00"/><rect x="1244" y="315" width="1" height="26" fill="#00ff00"/><rect x="1243" y="318" width="3" height="23" fill="#00ff00"/><rect x="1244" y="319" width="1" height="21" fill="#000"/><rect x="1248" y="319" width="1" height="20" fill="#00ff00"/><rect x="1247" y="319" width="3" height="6" fill="#00ff00"/><rect x="1248" y="320" width="1" height="4" fill="#fff"/><rect x="1252" y="317" width="1" height="20" fill="#00ff00"/><rect x="1251" y="318" width="3" height="6" fill="#00ff00"/><rect x="1252" y="319" width="1" height="4" fill="#000"/><rect x="1256" y="308" width="1" height="18" fill="#00ff00"/><rect x="1255" y="308" width="3" height="12" fill="#00ff00"/><rect x="1256" y="309" width="1" height="10" fill="#000"/><rect x="1260" y="294" width="1" height="21" fill="#00ff00"/><rect x="1259" y="305" width="3" height="6" fill="#00ff00"/><rect x="1260" y="306" width="1" height="4" fill="#000"/><rect x="1264" y="304" width="1" height="41" fill="#00ff00"/><rect x="1263" y="306" width="3" height="31" fill="#00ff00"/><rect x="1264" y="307" width="1" height="29" fill="#fff"/><rect x="1268" y="304" width="1" height="42" fill="#00ff00"/><rect x="1267" y="316" width="3" height="19" fill="#00ff00"/><rect x="1268" y="317" width="1" height="17" fill="#000"/><rect x="1272" y="279" width="1" height="40" fill="#00ff00"/><rect x="1271" y="291" width="3" height="26" fill="#00ff00"/><rect x="1272" y="292" width="1" height="24" fill="#000"/><rect x="1276" y="270" width="1" height="32" fill="#00ff00"/><rect x="1275" y="291" width="3" height="3" fill="#00ff00"/><rect x="1276" y="292" width="1" height="1" fill="#fff"/><rect x="1280" y="266" width="1" height="39" fill="#00ff00"/><rect x="1279" y="273" width="3" height="21" fill="#00ff00"/><rect x="1280" y="274" width="1" height="19" fill="#000"/><rect x="1284" y="255" width="1" height="28" fill="#00ff00"/><rect x="1283" y="270" width="3" height="4" fill="#00ff00"/><rect x="1284" y="271" width="1" height="2" fill="#000"/><rect x="1288" y="262" width="1" height="12" fill="#00ff00"/><rect x="1287" y="268" width="3" height="2" fill="#00ff00"/><rect x="1292" y="264" width="1" height="24" fill="#00ff00"/><rect x="1291" y="268" width="3" height="17" fill="#00ff00"/><rect x="1292" y="269" width="1" height="15" fill="#fff"/><rect x="1296" y="285" width="1" height="44" fill="#00ff00"/><rect x="1295" y="285" width="3" height="41" fill="#00ff00"/><rect x="1296" y="286" width="1" height="39" fill="#fff"/><rect x="1300" y="308" width="1" height="30" fill="#00ff00"/><rect x="1299" y="308" width="3" height="18" fill="#00ff00"/><rect x="1300" y="309" width="1" height="16" fill="#000"/><rect x="1304" y="292" width="1" height="29" fill="#00ff00"/><rect x="1303" y="301" width="3" height="8" fill="#00ff00"/><rect x="1304" y="302" width="1" height="6" fill="#000"/><rect x="1308" y="286" width="1" height="40" fill="#00ff00"/><rect x="1307" y="299" width="3" height="25" fill="#00ff00"/><rect x="1308" y="300" width="1" height="23" fill="#fff"/><rect x="1312" y="308" width="1" height="21" fill="#00ff00"/><rect x="1311" y="317" width="3" height="6" fill="#00ff00"/><rect x="1312" y="318" width="1" height="4" fill="#000"/><rect x="1316" y="292" width="1" height="30" fill="#00ff00"/><rect x="1315" y="297" width="3" height="21" fill="#00ff00"/><rect x="1316" y="298" width="1" height="19" fill="#000"/><rect x="1320" y="277" width="1" height="32" fill="#00ff00"/><rect x="1319" y="280" width="3" height="17" fill="#00ff00"/><rect x="1320" y="281" width="1" height="15" fill="#000"/><rect x="1324" y="243" width="1" height="37" fill="#00ff00"/><rect x="1323" y="254" width="3" height="26" fill="#00ff00"/><rect x="1324" y="255" width="1" height="24" fill="#000"/><rect x="1328" y="235" width="1" height="22" fill="#00ff00"/><rect x="1327" y="244" width="3" height="11" fill="#00ff00"/><rect x="1328" y="245" width="1" height="9" fill="#000"/><rect x="1332" y="243" width="1" height="24" fill="#00ff00"/><rect x="1331" y="243" width="3" height="22" fill="#00ff00"/><rect x="1332" y="244" width="1" height="20" fill="#fff"/></g>
<rect x="5" y="85" width="2" height="402" fill="#000"/><rect x="7" y="85" width="1" height="402" fill="#fff"/>
<g stroke="#c0c0c0" stroke-width="1" stroke-dasharray="3 3" fill="none"><path d="M9 551.5H1336M9 733.5H1336"/></g>
</svg>
<svg width="1384" height="805" viewBox="0 0 1384 805" style="left:0;top:0">
<polyline fill="none" stroke="#ff0000" stroke-width="1" stroke-dasharray="3 3" shape-rendering="crispEdges" points="8.5,581.6 12.5,573 16.5,561.1 20.5,542.8 24.5,521.9 28.5,510.2 32.5,509.9 36.5,522.2 40.5,540.2 44.5,566.1 48.5,593.1 52.5,608.3 56.5,606.3 60.5,600 64.5,608.2 68.5,636.7 72.5,675.5 76.5,713.9 80.5,750.4 84.5,762.7 88.5,755.1 92.5,731.5 96.5,722.8 100.5,728.1 104.5,733.5 108.5,729.3 112.5,716.2 116.5,708 120.5,709.5 124.5,721.1 128.5,733.7 132.5,745.7 136.5,754.4 140.5,763.9 144.5,765.1 148.5,760.7 152.5,754.7 156.5,757.1 160.5,767.9 164.5,772.4 168.5,770.4 172.5,757.7 176.5,752.8 180.5,754.1 184.5,763.6 188.5,768.1 192.5,767.8 196.5,762.3 200.5,754.9 204.5,749.7 208.5,750.9 212.5,763.9 216.5,771.5 220.5,773.6 224.5,768.4 228.5,758.7 232.5,748.2 236.5,730.6 240.5,732.1 244.5,737.8 248.5,748 252.5,745.9 256.5,739.1 260.5,739.7 264.5,737.8 268.5,745 272.5,735.2 276.5,723.2 280.5,701.2 284.5,697.8 288.5,700.5 292.5,708.7 296.5,701.5 300.5,709.6 304.5,719.9 308.5,731.1 312.5,698.9 316.5,631.4 320.5,568.3 324.5,548.3 328.5,567.1 332.5,579.9 336.5,562.9 340.5,535.7 344.5,523.5 348.5,540.7 352.5,573.3 356.5,606.5 360.5,627.2 364.5,636.4 368.5,629.5 372.5,612.2 376.5,591.5 380.5,593.2 384.5,611.7 388.5,622.8 392.5,626.8 396.5,626.8 400.5,651 404.5,673.1 408.5,690.5 412.5,689 416.5,672.7 420.5,647 424.5,612.7 428.5,578.5 432.5,548.3 436.5,530.5 440.5,525.1 444.5,527.6 448.5,536.9 452.5,544.7 456.5,551.4 460.5,554.5 464.5,578 468.5,611.8 472.5,638.4 476.5,635.3 480.5,627.2 484.5,647.5 488.5,680.9 492.5,713.4 496.5,717.9 500.5,716.5 504.5,697.2 508.5,686.7 512.5,687.5 516.5,712.8 520.5,741.1 524.5,761.4 528.5,770.2 532.5,764.1 536.5,751.7 540.5,728.5 544.5,714.1 548.5,693.7 552.5,684.7 556.5,666.8 560.5,657.8 564.5,635.3 568.5,607 572.5,567.8 576.5,536.5 580.5,514.9 584.5,506.5 588.5,501.2 592.5,514.9 596.5,530.3 600.5,554.5 604.5,554.7 608.5,561.2 612.5,555.3 616.5,571.1 620.5,579.4 624.5,588.2 628.5,566.3 632.5,537.7 636.5,515 640.5,512.4 644.5,520.4 648.5,528.9 652.5,536.2 656.5,535.1 660.5,534.8 664.5,539.5 668.5,556.9 672.5,571.6 676.5,579.3 680.5,579.4 684.5,582.3 688.5,592.1 692.5,588.7 696.5,576 700.5,559.4 704.5,566.4 708.5,593.3 712.5,621.9 716.5,631.2 720.5,615.2 724.5,595.7 728.5,579.9 732.5,571.3 736.5,552.8 740.5,541.4 744.5,551.6 748.5,582.4 752.5,614.5 756.5,648.6 760.5,679.1 764.5,719.7 768.5,730 772.5,734.7 776.5,721.4 780.5,717.9 784.5,709.4 788.5,690.6 792.5,680 796.5,680.9 800.5,708.2 804.5,725.6 808.5,735.1 812.5,730.4 816.5,730.4 820.5,728.7 824.5,734.6 828.5,728.8 832.5,727.3 836.5,724.3 840.5,738.6 844.5,746.6 848.5,739.6 852.5,717.7 856.5,684.3 860.5,655.7 864.5,637.6 868.5,626.3 872.5,604.9 876.5,558.7 880.5,525.4 884.5,506.5 888.5,512.4 892.5,510.5 896.5,516.2 900.5,521.7 904.5,530.4 908.5,539.9 912.5,562.1 916.5,606.9 920.5,662.4 924.5,715.8 928.5,755.1 932.5,770.6 936.5,769.2 940.5,746.5 944.5,718.8 948.5,671.6 952.5,632.7 956.5,612.5 960.5,631.6 964.5,664.1 968.5,683.5 972.5,680.6 976.5,652.8 980.5,639 984.5,644.5 988.5,676 992.5,686.5 996.5,668.6 1000.5,636.6 1004.5,616.2 1008.5,627.1 1012.5,649.9 1016.5,682.1 1020.5,680.2 1024.5,672.2 1028.5,652.1 1032.5,651.9 1036.5,627.3 1040.5,590 1044.5,554.2 1048.5,557.9 1052.5,600.2 1056.5,642.3 1060.5,666.5 1064.5,664.1 1068.5,653.2 1072.5,636.6 1076.5,612.4 1080.5,585.8 1084.5,559 1088.5,538.1 1092.5,530.1 1096.5,532.5 1100.5,541.5 1104.5,543.2 1108.5,542.3 1112.5,548.9 1116.5,561.4 1120.5,573.8 1124.5,574.3 1128.5,573.8 1132.5,577.5 1136.5,594.4 1140.5,609.1 1144.5,618.8 1148.5,622.3 1152.5,633.4 1156.5,641.5 1160.5,641.9 1164.5,623.7 1168.5,613.3 1172.5,613.9 1176.5,637.9 1180.5,675.9 1184.5,698.4 1188.5,695.6 1192.5,653.9 1196.5,625.2 1200.5,632 1204.5,668.2 1208.5,702.5 1212.5,704.8 1216.5,703.4 1220.5,711.6 1224.5,689.8 1228.5,638.9 1232.5,567.6 1236.5,552.8 1240.5,578.8 1244.5,622.6 1248.5,645.2 1252.5,645.4 1256.5,634.8 1260.5,623.2 1264.5,620.8 1268.5,622.4 1272.5,625.2 1276.5,614.5 1280.5,594.5 1284.5,574.2 1288.5,556.8 1292.5,549.6 1296.5,563.7 1300.5,601.6 1304.5,645.2 1308.5,670.2 1312.5,681.1 1316.5,682.2 1320.5,667.8 1324.5,630.7 1328.5,582.4 1332.5,551.4"/>
<polyline fill="none" stroke="#20b2aa" stroke-width="1" shape-rendering="crispEdges" points="8.5,574 12.5,564.6 16.5,544.7 20.5,519 24.5,502 28.5,509.7 32.5,518 36.5,539 40.5,563.6 44.5,595.8 48.5,620 52.5,609 56.5,590 60.5,601 64.5,633.6 68.5,675.5 72.5,717.4 76.5,748.6 80.5,785.3 84.5,754.1 88.5,725.9 92.5,714.3 96.5,728.1 100.5,741.8 104.5,730.8 108.5,715.2 112.5,702.6 116.5,706.2 120.5,719.8 124.5,737.3 128.5,744 132.5,755.8 136.5,763.4 140.5,772.5 144.5,759.5 148.5,750 152.5,754.6 156.5,766.6 160.5,782.4 164.5,768.1 168.5,760.6 172.5,744.5 176.5,753.1 180.5,764.8 184.5,772.9 188.5,766.5 192.5,764.1 196.5,756.2 200.5,744.3 204.5,748.8 208.5,759.7 212.5,783.4 216.5,771.5 220.5,765.9 224.5,767.9 228.5,742.2 232.5,734.4 236.5,715.2 240.5,746.7 244.5,751.4 248.5,745.8 252.5,740.5 256.5,730.9 260.5,747.7 264.5,734.9 268.5,752.3 272.5,718.5 276.5,698.7 280.5,686.3 284.5,708.4 288.5,706.9 292.5,711 296.5,686.6 300.5,731.1 304.5,742.1 308.5,720.1 312.5,634.6 316.5,539.4 320.5,530.9 324.5,574.5 328.5,595.9 332.5,569.2 336.5,523.6 340.5,514.2 344.5,532.7 348.5,575.1 352.5,612 356.5,632.5 360.5,637.1 364.5,639.6 368.5,611.7 372.5,585.4 376.5,577.3 380.5,616.8 384.5,641 388.5,610.7 392.5,628.8 396.5,641 400.5,683.3 404.5,695 408.5,693.3 412.5,678.7 416.5,646 420.5,616.3 424.5,575.9 428.5,543.5 432.5,525.7 436.5,522.5 440.5,527.3 444.5,532.9 448.5,550.6 452.5,550.6 456.5,553 460.5,559.8 464.5,621.1 468.5,654.3 472.5,639.8 476.5,611.7 480.5,630.2 484.5,700.6 488.5,711.8 492.5,727.7 496.5,714.1 500.5,707.8 504.5,669.8 508.5,682.5 512.5,710.3 516.5,745.7 520.5,767.4 524.5,771.1 528.5,772 532.5,749.3 536.5,733.6 540.5,702.7 544.5,706.1 548.5,672.4 552.5,675.7 556.5,652.1 560.5,645.4 564.5,608.3 568.5,567.3 572.5,527.7 576.5,514.5 580.5,499.3 584.5,499.3 588.5,499.3 592.5,543.7 596.5,548.7 600.5,571.1 604.5,544.3 608.5,568.2 612.5,553.6 616.5,591.5 620.5,593 624.5,580.1 628.5,525.8 632.5,507.2 636.5,511.8 640.5,518.2 644.5,531.1 648.5,537.5 652.5,539.9 656.5,527.8 660.5,536.7 664.5,554 668.5,580.1 672.5,580.7 676.5,577 680.5,580.4 684.5,589.6 688.5,606.3 692.5,570.3 696.5,551.5 700.5,556.3 704.5,591.5 708.5,632.3 712.5,642 716.5,619.3 720.5,584.3 724.5,583.7 728.5,571.9 732.5,558.3 736.5,528.3 740.5,537.6 744.5,588.8 748.5,620.7 752.5,634.1 756.5,691 760.5,712.2 764.5,755.8 768.5,722.1 772.5,726.3 776.5,715.8 780.5,711.5 784.5,701 788.5,659.1 792.5,680 796.5,703.5 800.5,741.3 804.5,732 808.5,732 812.5,727.2 816.5,732 820.5,726.9 824.5,744.8 828.5,714.7 832.5,722.3 836.5,735.9 840.5,757.5 844.5,746.3 848.5,714.9 852.5,692 856.5,646.1 860.5,629 864.5,637.6 868.5,612.2 872.5,565 876.5,498.9 880.5,512.3 884.5,508.2 888.5,516.6 892.5,506.8 896.5,525.4 900.5,532.9 904.5,532.9 908.5,553.9 912.5,599.3 916.5,667.6 920.5,720.2 924.5,759.7 928.5,785.4 932.5,766.6 936.5,755.5 940.5,717.3 944.5,683.6 948.5,613.9 952.5,600.5 956.5,622.9 960.5,671.5 964.5,697.9 968.5,681.1 972.5,662.7 976.5,614.5 980.5,639.7 984.5,679.2 988.5,708.9 992.5,671.2 996.5,625.7 1000.5,612.8 1004.5,610 1008.5,658.4 1012.5,681.2 1016.5,706.8 1020.5,652.7 1024.5,657 1028.5,646.5 1032.5,652.1 1036.5,583.3 1040.5,534.4 1044.5,544.8 1048.5,594.5 1052.5,661.3 1056.5,671.2 1060.5,667 1064.5,654.1 1068.5,638.5 1072.5,617.1 1076.5,581.5 1080.5,558.7 1084.5,536.8 1088.5,518.8 1092.5,534.6 1096.5,544.1 1100.5,545.9 1104.5,539.5 1108.5,541.6 1112.5,565.5 1116.5,577 1120.5,578.8 1124.5,567.1 1128.5,575.5 1132.5,590.1 1136.5,617.7 1140.5,619.6 1144.5,619.1 1148.5,628.2 1152.5,652.8 1156.5,643.6 1160.5,629.4 1164.5,598 1168.5,612.4 1172.5,631.2 1176.5,670.1 1180.5,726.3 1184.5,698.7 1188.5,661.7 1192.5,601.3 1196.5,612.5 1200.5,682 1204.5,710 1208.5,715.4 1212.5,689 1216.5,705.8 1220.5,740 1224.5,623.5 1228.5,553.3 1232.5,526.1 1236.5,579 1240.5,631.3 1244.5,657.4 1248.5,646.9 1252.5,631.9 1256.5,625.4 1260.5,612.4 1264.5,624.7 1268.5,630 1272.5,620.8 1276.5,592.8 1280.5,569.9 1284.5,560 1288.5,540.7 1292.5,548.2 1296.5,602.2 1300.5,654.3 1304.5,679.3 1308.5,677 1312.5,687 1316.5,682.6 1320.5,633.7 1324.5,575.8 1328.5,537.6 1332.5,540.8"/>
<g font-family="'Liberation Sans',sans-serif" font-size="9.5px" fill="#fff"><text x="1342.3" y="119" textLength="32.7" lengthAdjust="spacingAndGlyphs">1.13975</text><text x="1342.3" y="152" textLength="32.7" lengthAdjust="spacingAndGlyphs">1.13890</text><text x="1342.3" y="186" textLength="32.7" lengthAdjust="spacingAndGlyphs">1.13805</text><text x="1342.3" y="219" textLength="32.7" lengthAdjust="spacingAndGlyphs">1.13720</text><text x="1342.3" y="253" textLength="32.7" lengthAdjust="spacingAndGlyphs">1.13635</text><text x="1342.3" y="286" textLength="32.7" lengthAdjust="spacingAndGlyphs">1.13550</text><text x="1342.3" y="320" textLength="32.7" lengthAdjust="spacingAndGlyphs">1.13465</text><text x="1342.3" y="353" textLength="32.7" lengthAdjust="spacingAndGlyphs">1.13380</text><text x="1342.3" y="387" textLength="32.7" lengthAdjust="spacingAndGlyphs">1.13295</text><text x="1342.3" y="420" textLength="32.7" lengthAdjust="spacingAndGlyphs">1.13210</text><text x="1342.3" y="453" textLength="32.7" lengthAdjust="spacingAndGlyphs">1.13125</text><text x="1342.3" y="487" textLength="32.7" lengthAdjust="spacingAndGlyphs">1.13040</text><text x="1342.3" y="241" fill="#000" textLength="32.7" lengthAdjust="spacingAndGlyphs">1.13664</text><text x="1340.3" y="500" textLength="15" lengthAdjust="spacingAndGlyphs">100</text><text x="1339" y="555" textLength="10" lengthAdjust="spacingAndGlyphs">80</text><text x="1339" y="737" textLength="10" lengthAdjust="spacingAndGlyphs">20</text><text x="1340" y="791">0</text><text x="23.4" y="96" textLength="54.6" lengthAdjust="spacingAndGlyphs">EURUSD,M5</text><text x="84.6" y="96" textLength="140.4" lengthAdjust="spacingAndGlyphs">1.13645 1.13672 1.13645 1.13664</text><text x="12.1" y="502" textLength="126.6" lengthAdjust="spacingAndGlyphs">Stoch(14,3,3) 91.2281 84.4457</text></g>
<path d="M11 91h7l-3.5 4z" fill="#fff"/>
</svg>
</body>
</html>
